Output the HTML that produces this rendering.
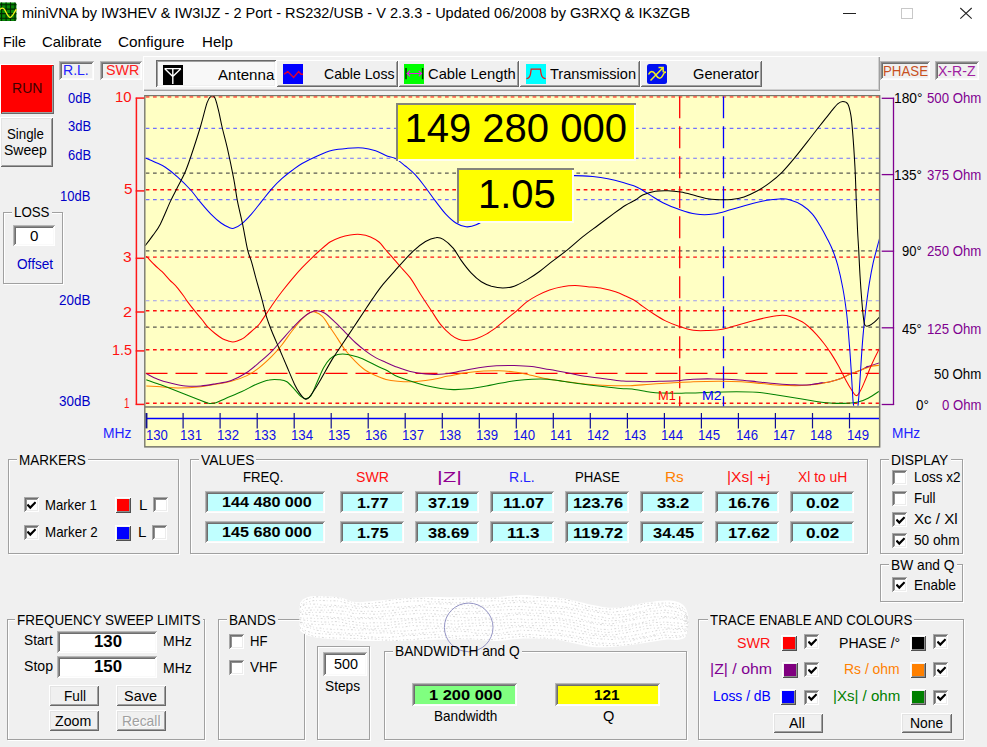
<!DOCTYPE html>
<html lang="en"><head><meta charset="utf-8"><title>miniVNA</title><style>
html,body{margin:0;padding:0}
body{width:987px;height:747px;overflow:hidden;background:#f0f0f0;position:relative;font-family:"Liberation Sans",sans-serif}
#w{position:absolute;left:0;top:0;width:987px;height:747px;overflow:hidden;background:#f0f0f0}
#w div,#w svg,#w span{position:absolute}
.gb{border:1px solid #a0a0a0;box-shadow:1px 1px 0 #fff,inset 1px 1px 0 #fff}
.t{white-space:pre;line-height:20px;height:20px;transform-origin:0 50%}
</style></head><body><div id="w">
<div style="left:0px;top:0px;width:987px;height:51px;background:#fff"></div>
<div style="left:0px;top:51px;width:987px;height:1px;background:#f5f5f5"></div>
<svg class="ab" style="left:0;top:0" width="18" height="24" viewBox="0 0 18 24">
<path d="M0 2.6H14.8Q16.4 2.6 16.4 4.2V19.4Q16.4 21 14.8 21H0Z" fill="#078707"/>
<path d="M1.6 2.6V21M6.1 2.6V21M10.5 2.6V21M15 2.6V21M0 4.7H16.4M0 9.1H16.4M0 13.6H16.4M0 18.2H16.4" stroke="#012a01" stroke-width="1.1"/>
<path d="M0 9.6 C1 8 3.2 7.4 4.6 9.6 S8 17.4 10.1 17.4 S14 12.5 16.4 9.2" fill="none" stroke="#f4f41c" stroke-width="1.4"/></svg>
<svg class="ab" style="left:830px;top:0" width="157" height="30" viewBox="0 0 157 30">
<path d="M13 13.5H26" stroke="#222" stroke-width="1"/>
<rect x="71.5" y="8.5" width="11" height="10" fill="none" stroke="#c8c8c8" stroke-width="1"/>
<path d="M130.3 8 L141.7 18.6 M141.7 8 L130.3 18.6" stroke="#222" stroke-width="1.05"/></svg>
<div class="sk" style="left:0px;top:63.5px;width:54px;height:50.5px;background:#ff0000;box-shadow:inset 1px 1px 0 #ffffff,inset -1px -1px 0 #696969,inset 2px 2px 0 #ff0000,inset -2px -2px 0 #a0a0a0"></div>
<div class="sk" style="left:0px;top:117px;width:52.7px;height:50px;background:#f0f0f0;box-shadow:inset 1px 1px 0 #ffffff,inset -1px -1px 0 #696969,inset 2px 2px 0 #e3e3e3,inset -2px -2px 0 #a0a0a0"></div>
<div class="sk" style="left:59px;top:60.5px;width:35px;height:19.5px;background:#f0f0f0;box-shadow:inset 1px 1px 0 #b8b8b8,inset -1px -1px 0 #ffffff,inset 2px 2px 0 #8a8a8a,inset -2px -2px 0 #fafafa,inset 3px 3px 0 #6e6e6e"></div>
<div class="sk" style="left:100px;top:60.5px;width:42px;height:19.5px;background:#f0f0f0;box-shadow:inset 1px 1px 0 #b8b8b8,inset -1px -1px 0 #ffffff,inset 2px 2px 0 #8a8a8a,inset -2px -2px 0 #fafafa,inset 3px 3px 0 #6e6e6e"></div>
<div class="gb" style="left:3px;top:212px;width:58px;height:70px"></div>
<div style="left:11.7px;top:210px;width:39.9px;height:6px;background:#f0f0f0"></div>
<div class="sk" style="left:13px;top:225px;width:42px;height:21px;background:#fff;box-shadow:inset 1px 1px 0 #b8b8b8,inset -1px -1px 0 #ffffff,inset 2px 2px 0 #8a8a8a,inset -2px -2px 0 #fafafa,inset 3px 3px 0 #6e6e6e"></div>
<div style="left:143px;top:56.2px;width:737px;height:35.3px;background:#f2f2f2;box-shadow:inset 1px 1px 0 #fff,inset -1px -1px 0 #a0a0a0,inset -2px -2px 0 #d0d0d0"></div>
<div class="sk" style="left:156px;top:60px;width:120px;height:27px;background:#f8f8f8;box-shadow:inset 1px 1px 0 #696969,inset -1px -1px 0 #ffffff,inset 2px 2px 0 #a0a0a0,inset -2px -2px 0 #f0f0f0"></div>
<div class="sk" style="left:276px;top:60px;width:121.5px;height:27px;background:#f0f0f0;box-shadow:inset 1px 1px 0 #ffffff,inset -1px -1px 0 #696969,inset 2px 2px 0 #f0f0f0,inset -2px -2px 0 #a0a0a0"></div>
<div class="sk" style="left:397.5px;top:60px;width:121.5px;height:27px;background:#f0f0f0;box-shadow:inset 1px 1px 0 #ffffff,inset -1px -1px 0 #696969,inset 2px 2px 0 #f0f0f0,inset -2px -2px 0 #a0a0a0"></div>
<div class="sk" style="left:519px;top:60px;width:121px;height:27px;background:#f0f0f0;box-shadow:inset 1px 1px 0 #ffffff,inset -1px -1px 0 #696969,inset 2px 2px 0 #f0f0f0,inset -2px -2px 0 #a0a0a0"></div>
<div class="sk" style="left:640px;top:60px;width:121.5px;height:27px;background:#f0f0f0;box-shadow:inset 1px 1px 0 #ffffff,inset -1px -1px 0 #696969,inset 2px 2px 0 #f0f0f0,inset -2px -2px 0 #a0a0a0"></div>
<svg class="ab" style="left:163px;top:65px" width="20" height="20" viewBox="0 0 20 20"><rect width="20" height="20" fill="#000"/>
<path d="M1.5 3.6H18 M9.8 3.6V19 M1.8 3.8L9.8 11.6L17.8 3.8" fill="none" stroke="#fff" stroke-width="1.4"/></svg>
<svg class="ab" style="left:283px;top:64px" width="20" height="20" viewBox="0 0 20 20"><rect width="20" height="20" fill="#0000ff"/>
<path d="M1 10.2 L4.8 7.6 L10.6 13.4 L15.6 7.6 L18 10.2 H20" fill="none" stroke="#e00030" stroke-width="1.4"/></svg>
<svg class="ab" style="left:404px;top:64px" width="20" height="20" viewBox="0 0 20 20"><rect width="20" height="20" fill="#00ff00"/>
<path d="M2 4V15.2 M18.6 4V15.2" stroke="#003000" stroke-width="1.5"/><path d="M3.2 9.5H17.5 M6 6.8L3.2 9.5L6 12.2 M14.8 6.8L17.5 9.5L14.8 12.2" fill="none" stroke="#e020e0" stroke-width="1.2"/></svg>
<svg class="ab" style="left:525.5px;top:64px" width="20" height="20" viewBox="0 0 20 20"><rect width="20" height="20" fill="#00ffff"/>
<path d="M0.5 14.6 C3.5 14.2 4.4 12.5 5.2 5 H14.4 C15.2 12.5 16.2 14.2 19.6 14.6" fill="none" stroke="#f01414" stroke-width="1.25"/></svg>
<svg class="ab" style="left:646.5px;top:64px" width="20" height="20" viewBox="0 0 20 20"><rect width="20" height="20" rx="2.5" fill="#0010f0"/>
<path d="M1.5 10.5 C3.5 6.5 6 6.5 8.5 10.5 S13.5 16 16 11 S18 8.5 19 8.5" fill="none" stroke="#f0f020" stroke-width="1.5"/>
<path d="M3.5 16.5 L16 3.8 M11.5 3.6 H16.2 V8.2" fill="none" stroke="#f0f020" stroke-width="1.5"/></svg>
<div class="sk" style="left:880px;top:60.5px;width:50px;height:19.5px;background:#f0f0f0;box-shadow:inset 1px 1px 0 #b8b8b8,inset -1px -1px 0 #ffffff,inset 2px 2px 0 #8a8a8a,inset -2px -2px 0 #fafafa,inset 3px 3px 0 #6e6e6e"></div>
<div class="sk" style="left:934.5px;top:60.5px;width:44.5px;height:19.5px;background:#f0f0f0;box-shadow:inset 1px 1px 0 #b8b8b8,inset -1px -1px 0 #ffffff,inset 2px 2px 0 #8a8a8a,inset -2px -2px 0 #fafafa,inset 3px 3px 0 #6e6e6e"></div>
<div class="gb" style="left:8px;top:459px;width:169px;height:93px"></div>
<div style="left:16.8px;top:457px;width:71.1px;height:6px;background:#f0f0f0"></div>
<div class="sk" style="left:23.5px;top:497px;width:15px;height:15px;background:#fff;box-shadow:inset 1px 1px 0 #a8a8a8,inset -1px -1px 0 #ffffff,inset 2px 2px 0 #707070,inset -2px -2px 0 #ececec,inset 3px 3px 0 #909090"></div>
<svg class="ck" style="left:27px;top:500.5px" width="9" height="9" viewBox="0 0 9 9"><path d="M0.4 3.6 L3.3 6.6 L8.6 1.2" fill="none" stroke="#000" stroke-width="2.2"/></svg>
<div class="sk" style="left:23.5px;top:524.5px;width:15px;height:15px;background:#fff;box-shadow:inset 1px 1px 0 #a8a8a8,inset -1px -1px 0 #ffffff,inset 2px 2px 0 #707070,inset -2px -2px 0 #ececec,inset 3px 3px 0 #909090"></div>
<svg class="ck" style="left:27px;top:528px" width="9" height="9" viewBox="0 0 9 9"><path d="M0.4 3.6 L3.3 6.6 L8.6 1.2" fill="none" stroke="#000" stroke-width="2.2"/></svg>
<div class="sk" style="left:114.5px;top:497px;width:16px;height:16px;background:#ff0000;box-shadow:inset 1px 1px 0 #ffffff,inset -1px -1px 0 #505050,inset 2px 2px 0 #f4f4f4,inset -2px -2px 0 #8c8c8c"></div>
<div class="sk" style="left:114.5px;top:524.5px;width:16px;height:16px;background:#0000ff;box-shadow:inset 1px 1px 0 #ffffff,inset -1px -1px 0 #505050,inset 2px 2px 0 #f4f4f4,inset -2px -2px 0 #8c8c8c"></div>
<div class="sk" style="left:153px;top:497px;width:15px;height:15px;background:#fff;box-shadow:inset 1px 1px 0 #a8a8a8,inset -1px -1px 0 #ffffff,inset 2px 2px 0 #707070,inset -2px -2px 0 #ececec,inset 3px 3px 0 #909090"></div>
<div class="sk" style="left:152px;top:524.5px;width:15px;height:15px;background:#fff;box-shadow:inset 1px 1px 0 #a8a8a8,inset -1px -1px 0 #ffffff,inset 2px 2px 0 #707070,inset -2px -2px 0 #ececec,inset 3px 3px 0 #909090"></div>
<div class="gb" style="left:190px;top:459px;width:676px;height:93px"></div>
<div style="left:198.5px;top:457px;width:57.9px;height:6px;background:#f0f0f0"></div>
<div class="sk" style="left:205px;top:490.5px;width:120px;height:22px;background:#c0ffff;box-shadow:inset 1px 1px 0 #b8b8b8,inset -1px -1px 0 #ffffff,inset 2px 2px 0 #8a8a8a,inset -2px -2px 0 #fafafa,inset 3px 3px 0 #6e6e6e"></div>
<div class="sk" style="left:340.3px;top:490.5px;width:63.8px;height:22px;background:#c0ffff;box-shadow:inset 1px 1px 0 #b8b8b8,inset -1px -1px 0 #ffffff,inset 2px 2px 0 #8a8a8a,inset -2px -2px 0 #fafafa,inset 3px 3px 0 #6e6e6e"></div>
<div class="sk" style="left:415.2px;top:490.5px;width:63.8px;height:22px;background:#c0ffff;box-shadow:inset 1px 1px 0 #b8b8b8,inset -1px -1px 0 #ffffff,inset 2px 2px 0 #8a8a8a,inset -2px -2px 0 #fafafa,inset 3px 3px 0 #6e6e6e"></div>
<div class="sk" style="left:490.4px;top:490.5px;width:63.6px;height:22px;background:#c0ffff;box-shadow:inset 1px 1px 0 #b8b8b8,inset -1px -1px 0 #ffffff,inset 2px 2px 0 #8a8a8a,inset -2px -2px 0 #fafafa,inset 3px 3px 0 #6e6e6e"></div>
<div class="sk" style="left:565.1px;top:490.5px;width:64.1px;height:22px;background:#c0ffff;box-shadow:inset 1px 1px 0 #b8b8b8,inset -1px -1px 0 #ffffff,inset 2px 2px 0 #8a8a8a,inset -2px -2px 0 #fafafa,inset 3px 3px 0 #6e6e6e"></div>
<div class="sk" style="left:640.1px;top:490.5px;width:63.9px;height:22px;background:#c0ffff;box-shadow:inset 1px 1px 0 #b8b8b8,inset -1px -1px 0 #ffffff,inset 2px 2px 0 #8a8a8a,inset -2px -2px 0 #fafafa,inset 3px 3px 0 #6e6e6e"></div>
<div class="sk" style="left:715.4px;top:490.5px;width:63.3px;height:22px;background:#c0ffff;box-shadow:inset 1px 1px 0 #b8b8b8,inset -1px -1px 0 #ffffff,inset 2px 2px 0 #8a8a8a,inset -2px -2px 0 #fafafa,inset 3px 3px 0 #6e6e6e"></div>
<div class="sk" style="left:790px;top:490.5px;width:63.7px;height:22px;background:#c0ffff;box-shadow:inset 1px 1px 0 #b8b8b8,inset -1px -1px 0 #ffffff,inset 2px 2px 0 #8a8a8a,inset -2px -2px 0 #fafafa,inset 3px 3px 0 #6e6e6e"></div>
<div class="sk" style="left:205px;top:520.5px;width:120px;height:22px;background:#c0ffff;box-shadow:inset 1px 1px 0 #b8b8b8,inset -1px -1px 0 #ffffff,inset 2px 2px 0 #8a8a8a,inset -2px -2px 0 #fafafa,inset 3px 3px 0 #6e6e6e"></div>
<div class="sk" style="left:340.3px;top:520.5px;width:63.8px;height:22px;background:#c0ffff;box-shadow:inset 1px 1px 0 #b8b8b8,inset -1px -1px 0 #ffffff,inset 2px 2px 0 #8a8a8a,inset -2px -2px 0 #fafafa,inset 3px 3px 0 #6e6e6e"></div>
<div class="sk" style="left:415.2px;top:520.5px;width:63.8px;height:22px;background:#c0ffff;box-shadow:inset 1px 1px 0 #b8b8b8,inset -1px -1px 0 #ffffff,inset 2px 2px 0 #8a8a8a,inset -2px -2px 0 #fafafa,inset 3px 3px 0 #6e6e6e"></div>
<div class="sk" style="left:490.4px;top:520.5px;width:63.6px;height:22px;background:#c0ffff;box-shadow:inset 1px 1px 0 #b8b8b8,inset -1px -1px 0 #ffffff,inset 2px 2px 0 #8a8a8a,inset -2px -2px 0 #fafafa,inset 3px 3px 0 #6e6e6e"></div>
<div class="sk" style="left:565.1px;top:520.5px;width:64.1px;height:22px;background:#c0ffff;box-shadow:inset 1px 1px 0 #b8b8b8,inset -1px -1px 0 #ffffff,inset 2px 2px 0 #8a8a8a,inset -2px -2px 0 #fafafa,inset 3px 3px 0 #6e6e6e"></div>
<div class="sk" style="left:640.1px;top:520.5px;width:63.9px;height:22px;background:#c0ffff;box-shadow:inset 1px 1px 0 #b8b8b8,inset -1px -1px 0 #ffffff,inset 2px 2px 0 #8a8a8a,inset -2px -2px 0 #fafafa,inset 3px 3px 0 #6e6e6e"></div>
<div class="sk" style="left:715.4px;top:520.5px;width:63.3px;height:22px;background:#c0ffff;box-shadow:inset 1px 1px 0 #b8b8b8,inset -1px -1px 0 #ffffff,inset 2px 2px 0 #8a8a8a,inset -2px -2px 0 #fafafa,inset 3px 3px 0 #6e6e6e"></div>
<div class="sk" style="left:790px;top:520.5px;width:63.7px;height:22px;background:#c0ffff;box-shadow:inset 1px 1px 0 #b8b8b8,inset -1px -1px 0 #ffffff,inset 2px 2px 0 #8a8a8a,inset -2px -2px 0 #fafafa,inset 3px 3px 0 #6e6e6e"></div>
<div class="gb" style="left:880px;top:459px;width:81px;height:93px"></div>
<div style="left:888.9px;top:457px;width:61.7px;height:6px;background:#f0f0f0"></div>
<div class="sk" style="left:892px;top:470px;width:15px;height:15px;background:#fff;box-shadow:inset 1px 1px 0 #a8a8a8,inset -1px -1px 0 #ffffff,inset 2px 2px 0 #707070,inset -2px -2px 0 #ececec,inset 3px 3px 0 #909090"></div>
<div class="sk" style="left:892px;top:491px;width:15px;height:15px;background:#fff;box-shadow:inset 1px 1px 0 #a8a8a8,inset -1px -1px 0 #ffffff,inset 2px 2px 0 #707070,inset -2px -2px 0 #ececec,inset 3px 3px 0 #909090"></div>
<div class="sk" style="left:892px;top:512px;width:15px;height:15px;background:#fff;box-shadow:inset 1px 1px 0 #a8a8a8,inset -1px -1px 0 #ffffff,inset 2px 2px 0 #707070,inset -2px -2px 0 #ececec,inset 3px 3px 0 #909090"></div>
<svg class="ck" style="left:895.5px;top:515.5px" width="9" height="9" viewBox="0 0 9 9"><path d="M0.4 3.6 L3.3 6.6 L8.6 1.2" fill="none" stroke="#000" stroke-width="2.2"/></svg>
<div class="sk" style="left:892px;top:533px;width:15px;height:15px;background:#fff;box-shadow:inset 1px 1px 0 #a8a8a8,inset -1px -1px 0 #ffffff,inset 2px 2px 0 #707070,inset -2px -2px 0 #ececec,inset 3px 3px 0 #909090"></div>
<svg class="ck" style="left:895.5px;top:536.5px" width="9" height="9" viewBox="0 0 9 9"><path d="M0.4 3.6 L3.3 6.6 L8.6 1.2" fill="none" stroke="#000" stroke-width="2.2"/></svg>
<div class="gb" style="left:880px;top:564px;width:81px;height:36px"></div>
<div style="left:888.9px;top:562px;width:67.9px;height:6px;background:#f0f0f0"></div>
<div class="sk" style="left:892px;top:577px;width:15px;height:15px;background:#fff;box-shadow:inset 1px 1px 0 #a8a8a8,inset -1px -1px 0 #ffffff,inset 2px 2px 0 #707070,inset -2px -2px 0 #ececec,inset 3px 3px 0 #909090"></div>
<svg class="ck" style="left:895.5px;top:580.5px" width="9" height="9" viewBox="0 0 9 9"><path d="M0.4 3.6 L3.3 6.6 L8.6 1.2" fill="none" stroke="#000" stroke-width="2.2"/></svg>
<div class="gb" style="left:7px;top:619px;width:196px;height:119px"></div>
<div style="left:15.2px;top:617px;width:187.8px;height:6px;background:#f0f0f0"></div>
<div class="sk" style="left:57px;top:630.5px;width:100px;height:22px;background:#fff;box-shadow:inset 1px 1px 0 #b8b8b8,inset -1px -1px 0 #ffffff,inset 2px 2px 0 #8a8a8a,inset -2px -2px 0 #fafafa,inset 3px 3px 0 #6e6e6e"></div>
<div class="sk" style="left:57px;top:656px;width:100px;height:22px;background:#fff;box-shadow:inset 1px 1px 0 #b8b8b8,inset -1px -1px 0 #ffffff,inset 2px 2px 0 #8a8a8a,inset -2px -2px 0 #fafafa,inset 3px 3px 0 #6e6e6e"></div>
<div class="sk" style="left:49px;top:685px;width:50px;height:20.5px;background:#f0f0f0;box-shadow:inset 1px 1px 0 #ffffff,inset -1px -1px 0 #696969,inset 2px 2px 0 #e3e3e3,inset -2px -2px 0 #a0a0a0"></div>
<div class="sk" style="left:115.5px;top:685px;width:50px;height:20.5px;background:#f0f0f0;box-shadow:inset 1px 1px 0 #ffffff,inset -1px -1px 0 #696969,inset 2px 2px 0 #e3e3e3,inset -2px -2px 0 #a0a0a0"></div>
<div class="sk" style="left:49px;top:710px;width:50px;height:20.5px;background:#f0f0f0;box-shadow:inset 1px 1px 0 #ffffff,inset -1px -1px 0 #696969,inset 2px 2px 0 #e3e3e3,inset -2px -2px 0 #a0a0a0"></div>
<div class="sk" style="left:115.5px;top:710px;width:50px;height:20.5px;background:#f0f0f0;box-shadow:inset 1px 1px 0 #ffffff,inset -1px -1px 0 #696969,inset 2px 2px 0 #e3e3e3,inset -2px -2px 0 #a0a0a0"></div>
<div class="gb" style="left:218px;top:619px;width:85px;height:119px"></div>
<div style="left:226.6px;top:617px;width:51.1px;height:6px;background:#f0f0f0"></div>
<div class="sk" style="left:228.5px;top:633.5px;width:15px;height:15px;background:#fff;box-shadow:inset 1px 1px 0 #a8a8a8,inset -1px -1px 0 #ffffff,inset 2px 2px 0 #707070,inset -2px -2px 0 #ececec,inset 3px 3px 0 #909090"></div>
<div class="sk" style="left:228.5px;top:659.5px;width:15px;height:15px;background:#fff;box-shadow:inset 1px 1px 0 #a8a8a8,inset -1px -1px 0 #ffffff,inset 2px 2px 0 #707070,inset -2px -2px 0 #ececec,inset 3px 3px 0 #909090"></div>
<div class="gb" style="left:317px;top:646px;width:51px;height:92px"></div>
<div class="sk" style="left:323px;top:651.5px;width:43.5px;height:24.5px;background:#fff;box-shadow:inset 1px 1px 0 #b8b8b8,inset -1px -1px 0 #ffffff,inset 2px 2px 0 #8a8a8a,inset -2px -2px 0 #fafafa,inset 3px 3px 0 #6e6e6e"></div>
<div class="gb" style="left:384px;top:651px;width:301px;height:87px"></div>
<div style="left:392.7px;top:649px;width:129.1px;height:6px;background:#f0f0f0"></div>
<div class="sk" style="left:411.5px;top:682.5px;width:105px;height:23px;background:#80ff80;box-shadow:inset 1px 1px 0 #b8b8b8,inset -1px -1px 0 #ffffff,inset 2px 2px 0 #8a8a8a,inset -2px -2px 0 #fafafa,inset 3px 3px 0 #6e6e6e"></div>
<div class="sk" style="left:554.5px;top:682.5px;width:105px;height:23px;background:#ffff00;box-shadow:inset 1px 1px 0 #b8b8b8,inset -1px -1px 0 #ffffff,inset 2px 2px 0 #8a8a8a,inset -2px -2px 0 #fafafa,inset 3px 3px 0 #6e6e6e"></div>
<div class="gb" style="left:698px;top:619px;width:264px;height:119px"></div>
<div style="left:707.5px;top:617px;width:206.7px;height:6px;background:#f0f0f0"></div>
<div class="sk" style="left:780.5px;top:635px;width:16px;height:16px;background:#ff0000;box-shadow:inset 1px 1px 0 #ffffff,inset -1px -1px 0 #505050,inset 2px 2px 0 #f4f4f4,inset -2px -2px 0 #8c8c8c"></div>
<div class="sk" style="left:781.5px;top:662px;width:16px;height:16px;background:#800080;box-shadow:inset 1px 1px 0 #ffffff,inset -1px -1px 0 #505050,inset 2px 2px 0 #f4f4f4,inset -2px -2px 0 #8c8c8c"></div>
<div class="sk" style="left:779.5px;top:689px;width:16px;height:16px;background:#0000ff;box-shadow:inset 1px 1px 0 #ffffff,inset -1px -1px 0 #505050,inset 2px 2px 0 #f4f4f4,inset -2px -2px 0 #8c8c8c"></div>
<div class="sk" style="left:909.5px;top:635px;width:16px;height:16px;background:#000000;box-shadow:inset 1px 1px 0 #ffffff,inset -1px -1px 0 #505050,inset 2px 2px 0 #f4f4f4,inset -2px -2px 0 #8c8c8c"></div>
<div class="sk" style="left:909.5px;top:662px;width:16px;height:16px;background:#ff8000;box-shadow:inset 1px 1px 0 #ffffff,inset -1px -1px 0 #505050,inset 2px 2px 0 #f4f4f4,inset -2px -2px 0 #8c8c8c"></div>
<div class="sk" style="left:909.5px;top:689px;width:16px;height:16px;background:#008000;box-shadow:inset 1px 1px 0 #ffffff,inset -1px -1px 0 #505050,inset 2px 2px 0 #f4f4f4,inset -2px -2px 0 #8c8c8c"></div>
<div class="sk" style="left:804px;top:634px;width:15px;height:15px;background:#fff;box-shadow:inset 1px 1px 0 #a8a8a8,inset -1px -1px 0 #ffffff,inset 2px 2px 0 #707070,inset -2px -2px 0 #ececec,inset 3px 3px 0 #909090"></div>
<svg class="ck" style="left:807.5px;top:637.5px" width="9" height="9" viewBox="0 0 9 9"><path d="M0.4 3.6 L3.3 6.6 L8.6 1.2" fill="none" stroke="#000" stroke-width="2.2"/></svg>
<div class="sk" style="left:933px;top:634px;width:15px;height:15px;background:#fff;box-shadow:inset 1px 1px 0 #a8a8a8,inset -1px -1px 0 #ffffff,inset 2px 2px 0 #707070,inset -2px -2px 0 #ececec,inset 3px 3px 0 #909090"></div>
<svg class="ck" style="left:936.5px;top:637.5px" width="9" height="9" viewBox="0 0 9 9"><path d="M0.4 3.6 L3.3 6.6 L8.6 1.2" fill="none" stroke="#000" stroke-width="2.2"/></svg>
<div class="sk" style="left:804px;top:662px;width:15px;height:15px;background:#fff;box-shadow:inset 1px 1px 0 #a8a8a8,inset -1px -1px 0 #ffffff,inset 2px 2px 0 #707070,inset -2px -2px 0 #ececec,inset 3px 3px 0 #909090"></div>
<svg class="ck" style="left:807.5px;top:665.5px" width="9" height="9" viewBox="0 0 9 9"><path d="M0.4 3.6 L3.3 6.6 L8.6 1.2" fill="none" stroke="#000" stroke-width="2.2"/></svg>
<div class="sk" style="left:933px;top:662px;width:15px;height:15px;background:#fff;box-shadow:inset 1px 1px 0 #a8a8a8,inset -1px -1px 0 #ffffff,inset 2px 2px 0 #707070,inset -2px -2px 0 #ececec,inset 3px 3px 0 #909090"></div>
<svg class="ck" style="left:936.5px;top:665.5px" width="9" height="9" viewBox="0 0 9 9"><path d="M0.4 3.6 L3.3 6.6 L8.6 1.2" fill="none" stroke="#000" stroke-width="2.2"/></svg>
<div class="sk" style="left:804px;top:689.5px;width:15px;height:15px;background:#fff;box-shadow:inset 1px 1px 0 #a8a8a8,inset -1px -1px 0 #ffffff,inset 2px 2px 0 #707070,inset -2px -2px 0 #ececec,inset 3px 3px 0 #909090"></div>
<svg class="ck" style="left:807.5px;top:693px" width="9" height="9" viewBox="0 0 9 9"><path d="M0.4 3.6 L3.3 6.6 L8.6 1.2" fill="none" stroke="#000" stroke-width="2.2"/></svg>
<div class="sk" style="left:933px;top:689.5px;width:15px;height:15px;background:#fff;box-shadow:inset 1px 1px 0 #a8a8a8,inset -1px -1px 0 #ffffff,inset 2px 2px 0 #707070,inset -2px -2px 0 #ececec,inset 3px 3px 0 #909090"></div>
<svg class="ck" style="left:936.5px;top:693px" width="9" height="9" viewBox="0 0 9 9"><path d="M0.4 3.6 L3.3 6.6 L8.6 1.2" fill="none" stroke="#000" stroke-width="2.2"/></svg>
<div class="sk" style="left:772.5px;top:712.5px;width:50.5px;height:20px;background:#f0f0f0;box-shadow:inset 1px 1px 0 #ffffff,inset -1px -1px 0 #696969,inset 2px 2px 0 #e3e3e3,inset -2px -2px 0 #a0a0a0"></div>
<div class="sk" style="left:901px;top:712.5px;width:50.5px;height:20px;background:#f0f0f0;box-shadow:inset 1px 1px 0 #ffffff,inset -1px -1px 0 #696969,inset 2px 2px 0 #e3e3e3,inset -2px -2px 0 #a0a0a0"></div>
<svg class="ab" style="left:0;top:0" width="987" height="747" viewBox="0 0 987 747"><defs><clipPath id="cb"><path d="M299.7 606.0 C300.0 601.7 300.7 602.3 301.5 601.0 C302.3 599.7 302.5 599.2 304.6 598.4 C306.7 597.6 308.6 596.2 314.3 596.0 C320.0 595.8 331.7 596.2 338.6 597.2 C345.5 598.2 349.6 601.4 355.7 602.0 C361.8 602.6 367.8 601.4 375.1 600.8 C382.4 600.2 391.3 599.0 399.4 598.4 C407.5 597.8 415.6 597.4 423.7 597.2 C431.8 597.0 439.9 597.2 448.0 597.2 C456.1 597.2 464.3 597.2 472.4 597.2 C480.5 597.2 488.8 597.6 496.7 597.2 C504.6 596.8 513.1 595.2 520.0 595.0 C526.9 594.8 530.6 595.4 538.2 596.0 C545.8 596.6 556.5 597.2 565.6 598.7 C574.7 600.2 585.4 603.5 593.0 605.0 C600.6 606.5 605.1 607.6 611.2 607.8 C617.3 608.0 623.3 606.9 629.4 606.0 C635.5 605.1 641.6 603.2 647.7 602.3 C653.8 601.4 660.7 600.5 665.9 600.5 C671.1 600.5 675.4 600.9 678.7 602.3 C682.1 603.7 684.3 605.5 686.0 608.7 C687.7 611.9 688.7 617.0 688.7 621.5 C688.7 626.0 687.7 633.0 686.0 636.0 C684.3 639.0 682.1 639.1 678.7 639.7 C675.4 640.3 671.1 639.2 665.9 639.7 C660.7 640.2 653.8 641.5 647.7 642.4 C641.6 643.3 635.5 644.4 629.4 645.2 C623.3 646.0 617.3 646.7 611.2 647.0 C605.1 647.3 599.1 647.6 593.0 647.0 C586.9 646.4 580.8 644.6 574.7 643.4 C568.6 642.2 562.6 640.5 556.5 639.7 C550.4 638.9 544.3 638.9 538.2 638.8 C532.1 638.6 526.9 638.4 520.0 638.8 C513.1 639.1 504.6 640.8 496.7 640.9 C488.8 641.0 482.5 639.9 472.4 639.7 C462.3 639.5 448.1 639.5 435.9 639.7 C423.7 639.9 411.6 640.7 399.4 640.9 C387.2 641.1 373.0 641.1 362.9 640.9 C352.8 640.7 346.7 640.3 338.6 639.7 C330.5 639.1 320.4 638.5 314.3 637.3 C308.2 636.1 304.6 634.1 302.2 632.4 C299.8 630.7 300.1 631.4 299.7 627.0 C299.3 622.6 299.4 610.3 299.7 606.0Z"/></clipPath></defs><path d="M299.7 606.0 C300.0 601.7 300.7 602.3 301.5 601.0 C302.3 599.7 302.5 599.2 304.6 598.4 C306.7 597.6 308.6 596.2 314.3 596.0 C320.0 595.8 331.7 596.2 338.6 597.2 C345.5 598.2 349.6 601.4 355.7 602.0 C361.8 602.6 367.8 601.4 375.1 600.8 C382.4 600.2 391.3 599.0 399.4 598.4 C407.5 597.8 415.6 597.4 423.7 597.2 C431.8 597.0 439.9 597.2 448.0 597.2 C456.1 597.2 464.3 597.2 472.4 597.2 C480.5 597.2 488.8 597.6 496.7 597.2 C504.6 596.8 513.1 595.2 520.0 595.0 C526.9 594.8 530.6 595.4 538.2 596.0 C545.8 596.6 556.5 597.2 565.6 598.7 C574.7 600.2 585.4 603.5 593.0 605.0 C600.6 606.5 605.1 607.6 611.2 607.8 C617.3 608.0 623.3 606.9 629.4 606.0 C635.5 605.1 641.6 603.2 647.7 602.3 C653.8 601.4 660.7 600.5 665.9 600.5 C671.1 600.5 675.4 600.9 678.7 602.3 C682.1 603.7 684.3 605.5 686.0 608.7 C687.7 611.9 688.7 617.0 688.7 621.5 C688.7 626.0 687.7 633.0 686.0 636.0 C684.3 639.0 682.1 639.1 678.7 639.7 C675.4 640.3 671.1 639.2 665.9 639.7 C660.7 640.2 653.8 641.5 647.7 642.4 C641.6 643.3 635.5 644.4 629.4 645.2 C623.3 646.0 617.3 646.7 611.2 647.0 C605.1 647.3 599.1 647.6 593.0 647.0 C586.9 646.4 580.8 644.6 574.7 643.4 C568.6 642.2 562.6 640.5 556.5 639.7 C550.4 638.9 544.3 638.9 538.2 638.8 C532.1 638.6 526.9 638.4 520.0 638.8 C513.1 639.1 504.6 640.8 496.7 640.9 C488.8 641.0 482.5 639.9 472.4 639.7 C462.3 639.5 448.1 639.5 435.9 639.7 C423.7 639.9 411.6 640.7 399.4 640.9 C387.2 641.1 373.0 641.1 362.9 640.9 C352.8 640.7 346.7 640.3 338.6 639.7 C330.5 639.1 320.4 638.5 314.3 637.3 C308.2 636.1 304.6 634.1 302.2 632.4 C299.8 630.7 300.1 631.4 299.7 627.0 C299.3 622.6 299.4 610.3 299.7 606.0Z" fill="#ffffff"/><g clip-path="url(#cb)" stroke="#c8c8c8" stroke-width="0.7" fill="none"><path d="M297.0 607.3 L301.0 604.2 L305.0 599.6 L309.0 598.9 L313.0 597.5 L317.0 596.8 L321.0 597.2 L325.0 596.8 L329.0 597.3 L333.0 597.2 L337.0 597.5 L341.0 598.7 L345.0 600.4 L349.0 601.2 L353.0 602.6 L357.0 603.9 L361.0 604.2 L365.0 603.8 L369.0 603.4 L373.0 603.6 L377.0 602.3 L381.0 602.5 L385.0 601.3 L389.0 600.5 L393.0 599.8 L397.0 599.3 L401.0 599.3 L405.0 598.5 L409.0 598.6 L413.0 598.6 L417.0 598.3 L421.0 598.6 L425.0 598.3 L429.0 598.6 L433.0 599.0 L437.0 599.6 L441.0 599.5 L445.0 599.5 L449.0 599.6 L453.0 599.4 L457.0 599.0 L461.0 599.2 L465.0 598.8 L469.0 598.1 L473.0 598.2 L477.0 598.0 L481.0 598.2 L485.0 598.1 L489.0 597.8 L493.0 598.6 L497.0 598.0 L501.0 598.2 L505.0 598.4 L509.0 597.8 L513.0 597.9 L517.0 597.3 L521.0 597.7 L525.0 597.9 L529.0 597.8 L533.0 598.1 L537.0 597.5 L541.0 597.9 L545.0 597.9 L549.0 598.0 L553.0 598.1 L557.0 598.8 L561.0 599.3 L565.0 599.4 L569.0 600.5 L573.0 601.2 L577.0 602.9 L581.0 604.1 L585.0 605.6 L589.0 606.6 L593.0 607.2 L597.0 607.9 L601.0 608.7 L605.0 608.6 L609.0 609.3 L613.0 609.0 L617.0 608.2 L621.0 607.5 L625.0 607.5 L629.0 606.3 L633.0 605.6 L637.0 604.9 L641.0 604.6 L645.0 603.3 L649.0 603.2 L653.0 603.2 L657.0 603.3 L661.0 603.2 L665.0 603.0 L669.0 603.0 L673.0 603.7 L677.0 604.1 L681.0 606.6 L685.0 609.8 L689.0 621.9" stroke-dasharray="1.2 2.2 2 1.8 0.8 2.6" stroke-dashoffset="1.9"/><path d="M297.0 608.9 L301.0 606.2 L305.0 603.0 L309.0 601.8 L313.0 600.6 L317.0 600.6 L321.0 600.5 L325.0 600.6 L329.0 600.9 L333.0 600.8 L337.0 600.8 L341.0 601.6 L345.0 602.8 L349.0 603.5 L353.0 605.6 L357.0 606.4 L361.0 606.5 L365.0 606.5 L369.0 606.1 L373.0 606.0 L377.0 605.5 L381.0 605.5 L385.0 604.5 L389.0 603.9 L393.0 603.4 L397.0 602.7 L401.0 602.3 L405.0 601.6 L409.0 601.2 L413.0 601.1 L417.0 600.9 L421.0 601.1 L425.0 600.8 L429.0 601.9 L433.0 601.9 L437.0 601.8 L441.0 602.1 L445.0 602.4 L449.0 602.5 L453.0 602.3 L457.0 602.9 L461.0 602.8 L465.0 602.1 L469.0 601.9 L473.0 601.2 L477.0 601.0 L481.0 601.0 L485.0 600.8 L489.0 601.2 L493.0 600.7 L497.0 600.7 L501.0 601.4 L505.0 600.9 L509.0 600.4 L513.0 600.7 L517.0 600.1 L521.0 600.5 L525.0 601.2 L529.0 601.4 L533.0 601.3 L537.0 601.0 L541.0 601.1 L545.0 601.0 L549.0 601.7 L553.0 601.5 L557.0 601.9 L561.0 601.8 L565.0 602.1 L569.0 603.5 L573.0 604.7 L577.0 605.7 L581.0 606.8 L585.0 608.0 L589.0 609.1 L593.0 609.8 L597.0 610.8 L601.0 611.3 L605.0 611.6 L609.0 612.1 L613.0 612.3 L617.0 611.6 L621.0 611.3 L625.0 610.9 L629.0 609.8 L633.0 609.2 L637.0 608.3 L641.0 607.4 L645.0 606.1 L649.0 605.5 L653.0 605.3 L657.0 605.1 L661.0 604.9 L665.0 605.2 L669.0 606.0 L673.0 606.7 L677.0 606.9 L681.0 609.0 L685.0 612.0 L689.0 623.3" stroke-dasharray="1.2 2.2 2 1.8 0.8 2.6" stroke-dashoffset="7.0"/><path d="M297.0 609.3 L301.0 607.1 L305.0 604.4 L309.0 603.9 L313.0 604.2 L317.0 604.0 L321.0 604.9 L325.0 605.3 L329.0 605.0 L333.0 605.1 L337.0 605.7 L341.0 605.9 L345.0 606.0 L349.0 606.7 L353.0 607.4 L357.0 608.4 L361.0 608.1 L365.0 607.3 L369.0 607.7 L373.0 607.8 L377.0 607.5 L381.0 607.2 L385.0 607.3 L389.0 606.9 L393.0 606.7 L397.0 607.4 L401.0 606.9 L405.0 606.6 L409.0 606.7 L413.0 605.9 L417.0 605.8 L421.0 605.3 L425.0 604.3 L429.0 604.1 L433.0 603.9 L437.0 603.7 L441.0 604.0 L445.0 603.7 L449.0 604.0 L453.0 604.0 L457.0 605.0 L461.0 604.8 L465.0 605.2 L469.0 605.5 L473.0 606.0 L477.0 605.7 L481.0 606.1 L485.0 605.7 L489.0 605.5 L493.0 605.3 L497.0 604.6 L501.0 604.3 L505.0 603.4 L509.0 602.7 L513.0 602.9 L517.0 601.9 L521.0 602.0 L525.0 602.6 L529.0 602.8 L533.0 603.1 L537.0 603.7 L541.0 604.3 L545.0 605.1 L549.0 605.1 L553.0 605.9 L557.0 606.0 L561.0 606.4 L565.0 607.1 L569.0 607.5 L573.0 608.1 L577.0 608.9 L581.0 609.7 L585.0 609.9 L589.0 610.8 L593.0 611.6 L597.0 612.2 L601.0 613.0 L605.0 613.5 L609.0 614.4 L613.0 614.7 L617.0 615.0 L621.0 614.6 L625.0 614.6 L629.0 614.3 L633.0 613.0 L637.0 612.4 L641.0 611.7 L645.0 610.6 L649.0 609.0 L653.0 608.3 L657.0 607.9 L661.0 606.9 L665.0 606.5 L669.0 606.6 L673.0 607.6 L677.0 608.3 L681.0 610.3 L685.0 612.4 L689.0 624.4" stroke-dasharray="1.2 2.2 2 1.8 0.8 2.6" stroke-dashoffset="7.0"/><path d="M297.0 612.3 L301.0 610.5 L305.0 607.8 L309.0 608.0 L313.0 607.1 L317.0 607.0 L321.0 607.4 L325.0 607.3 L329.0 606.6 L333.0 606.8 L337.0 607.0 L341.0 607.3 L345.0 608.1 L349.0 609.2 L353.0 610.6 L357.0 610.7 L361.0 611.4 L365.0 611.4 L369.0 611.1 L373.0 611.4 L377.0 611.6 L381.0 611.3 L385.0 610.6 L389.0 611.0 L393.0 610.3 L397.0 609.9 L401.0 608.6 L405.0 608.3 L409.0 607.6 L413.0 607.9 L417.0 607.1 L421.0 606.8 L425.0 607.0 L429.0 607.6 L433.0 607.7 L437.0 607.5 L441.0 607.7 L445.0 608.6 L449.0 608.6 L453.0 608.8 L457.0 608.4 L461.0 608.3 L465.0 608.7 L469.0 608.3 L473.0 607.7 L477.0 608.3 L481.0 607.8 L485.0 607.7 L489.0 606.9 L493.0 607.5 L497.0 606.8 L501.0 607.2 L505.0 606.6 L509.0 606.4 L513.0 606.5 L517.0 606.8 L521.0 606.2 L525.0 606.5 L529.0 607.2 L533.0 607.1 L537.0 607.2 L541.0 607.4 L545.0 607.4 L549.0 607.7 L553.0 607.8 L557.0 607.9 L561.0 608.5 L565.0 608.4 L569.0 609.3 L573.0 609.9 L577.0 611.0 L581.0 611.7 L585.0 613.1 L589.0 614.0 L593.0 615.8 L597.0 616.4 L601.0 616.8 L605.0 617.7 L609.0 618.6 L613.0 617.9 L617.0 618.1 L621.0 617.1 L625.0 616.5 L629.0 616.2 L633.0 614.8 L637.0 613.8 L641.0 613.0 L645.0 612.4 L649.0 611.1 L653.0 611.2 L657.0 610.8 L661.0 610.5 L665.0 610.1 L669.0 610.6 L673.0 611.0 L677.0 611.8 L681.0 613.3 L685.0 616.1 L689.0 625.8" stroke-dasharray="1.2 2.2 2 1.8 0.8 2.6" stroke-dashoffset="1.7"/><path d="M297.0 613.5 L301.0 612.2 L305.0 610.6 L309.0 610.2 L313.0 610.0 L317.0 610.0 L321.0 610.2 L325.0 610.0 L329.0 610.2 L333.0 610.0 L337.0 610.6 L341.0 611.0 L345.0 611.4 L349.0 611.9 L353.0 613.4 L357.0 613.5 L361.0 613.7 L365.0 613.5 L369.0 614.0 L373.0 614.2 L377.0 614.2 L381.0 613.8 L385.0 613.9 L389.0 613.2 L393.0 613.0 L397.0 612.4 L401.0 612.2 L405.0 611.4 L409.0 610.9 L413.0 610.7 L417.0 610.3 L421.0 610.3 L425.0 610.1 L429.0 610.3 L433.0 610.4 L437.0 610.6 L441.0 611.0 L445.0 610.9 L449.0 611.1 L453.0 611.9 L457.0 611.4 L461.0 612.0 L465.0 611.9 L469.0 611.2 L473.0 611.7 L477.0 611.6 L481.0 611.1 L485.0 611.0 L489.0 610.9 L493.0 610.1 L497.0 610.4 L501.0 610.0 L505.0 609.9 L509.0 609.7 L513.0 609.6 L517.0 609.3 L521.0 609.6 L525.0 609.8 L529.0 610.2 L533.0 610.1 L537.0 610.2 L541.0 610.5 L545.0 611.0 L549.0 610.9 L553.0 611.6 L557.0 611.4 L561.0 611.7 L565.0 612.0 L569.0 612.7 L573.0 613.2 L577.0 613.6 L581.0 615.3 L585.0 616.3 L589.0 617.2 L593.0 618.3 L597.0 619.2 L601.0 619.3 L605.0 620.6 L609.0 620.8 L613.0 620.7 L617.0 620.5 L621.0 620.4 L625.0 619.4 L629.0 619.2 L633.0 618.4 L637.0 616.9 L641.0 615.8 L645.0 614.9 L649.0 614.3 L653.0 613.9 L657.0 613.4 L661.0 613.1 L665.0 612.4 L669.0 612.9 L673.0 613.7 L677.0 614.8 L681.0 615.8 L685.0 617.9 L689.0 626.6" stroke-dasharray="1.2 2.2 2 1.8 0.8 2.6" stroke-dashoffset="0.6"/><path d="M297.0 615.3 L301.0 614.2 L305.0 613.0 L309.0 612.5 L313.0 612.4 L317.0 612.3 L321.0 612.3 L325.0 612.0 L329.0 612.8 L333.0 612.3 L337.0 613.3 L341.0 614.0 L345.0 614.1 L349.0 615.5 L353.0 616.9 L357.0 617.8 L361.0 617.5 L365.0 617.5 L369.0 617.4 L373.0 617.9 L377.0 617.0 L381.0 617.0 L385.0 616.1 L389.0 615.9 L393.0 615.8 L397.0 614.5 L401.0 614.7 L405.0 614.1 L409.0 614.1 L413.0 613.8 L417.0 613.3 L421.0 613.9 L425.0 613.7 L429.0 613.5 L433.0 613.7 L437.0 614.4 L441.0 614.6 L445.0 614.6 L449.0 614.5 L453.0 614.6 L457.0 614.4 L461.0 614.7 L465.0 613.7 L469.0 614.0 L473.0 613.8 L477.0 613.0 L481.0 613.7 L485.0 613.4 L489.0 613.7 L493.0 613.3 L497.0 613.6 L501.0 613.5 L505.0 614.0 L509.0 613.5 L513.0 613.2 L517.0 613.1 L521.0 612.9 L525.0 612.9 L529.0 613.0 L533.0 613.7 L537.0 613.1 L541.0 613.6 L545.0 613.1 L549.0 613.1 L553.0 613.4 L557.0 613.3 L561.0 613.9 L565.0 615.0 L569.0 615.8 L573.0 616.8 L577.0 617.8 L581.0 619.2 L585.0 620.4 L589.0 621.2 L593.0 622.4 L597.0 622.3 L601.0 623.4 L605.0 623.4 L609.0 623.9 L613.0 623.7 L617.0 622.7 L621.0 621.8 L625.0 621.9 L629.0 620.5 L633.0 619.9 L637.0 619.0 L641.0 618.2 L645.0 618.0 L649.0 617.7 L653.0 616.8 L657.0 617.0 L661.0 616.5 L665.0 616.5 L669.0 616.8 L673.0 617.1 L677.0 617.4 L681.0 618.4 L685.0 620.2 L689.0 627.7" stroke-dasharray="1.2 2.2 2 1.8 0.8 2.6" stroke-dashoffset="2.3"/><path d="M297.0 615.5 L301.0 614.6 L305.0 614.2 L309.0 614.7 L313.0 615.1 L317.0 615.9 L321.0 616.1 L325.0 616.6 L329.0 616.9 L333.0 617.4 L337.0 617.7 L341.0 617.9 L345.0 618.0 L349.0 618.4 L353.0 618.9 L357.0 619.0 L361.0 618.8 L365.0 618.5 L369.0 618.6 L373.0 619.2 L377.0 618.5 L381.0 618.9 L385.0 619.1 L389.0 619.4 L393.0 618.9 L397.0 618.9 L401.0 618.7 L405.0 618.7 L409.0 618.5 L413.0 618.6 L417.0 618.0 L421.0 617.6 L425.0 616.4 L429.0 616.1 L433.0 616.4 L437.0 616.4 L441.0 616.0 L445.0 616.2 L449.0 615.8 L453.0 616.4 L457.0 617.1 L461.0 617.3 L465.0 617.6 L469.0 618.0 L473.0 617.5 L477.0 617.6 L481.0 617.7 L485.0 618.0 L489.0 618.1 L493.0 618.1 L497.0 617.7 L501.0 617.0 L505.0 616.4 L509.0 615.6 L513.0 615.2 L517.0 614.3 L521.0 614.8 L525.0 614.5 L529.0 615.5 L533.0 615.6 L537.0 615.8 L541.0 616.1 L545.0 616.8 L549.0 617.6 L553.0 618.1 L557.0 617.9 L561.0 618.3 L565.0 619.1 L569.0 619.8 L573.0 620.2 L577.0 620.6 L581.0 621.5 L585.0 621.6 L589.0 622.6 L593.0 623.6 L597.0 624.4 L601.0 624.6 L605.0 625.3 L609.0 625.6 L613.0 625.7 L617.0 625.6 L621.0 626.1 L625.0 625.6 L629.0 625.0 L633.0 624.0 L637.0 623.6 L641.0 622.9 L645.0 621.7 L649.0 620.6 L653.0 620.2 L657.0 619.7 L661.0 618.3 L665.0 617.5 L669.0 617.9 L673.0 618.3 L677.0 619.0 L681.0 619.4 L685.0 621.2 L689.0 628.5" stroke-dasharray="1.2 2.2 2 1.8 0.8 2.6" stroke-dashoffset="5.4"/><path d="M297.0 618.5 L301.0 617.8 L305.0 618.3 L309.0 618.1 L313.0 618.2 L317.0 618.8 L321.0 618.4 L325.0 619.0 L329.0 618.6 L333.0 618.5 L337.0 618.7 L341.0 619.4 L345.0 620.3 L349.0 621.4 L353.0 621.5 L357.0 622.5 L361.0 622.6 L365.0 623.5 L369.0 622.8 L373.0 622.8 L377.0 622.7 L381.0 622.8 L385.0 622.9 L389.0 622.5 L393.0 621.9 L397.0 621.7 L401.0 621.2 L405.0 620.2 L409.0 619.7 L413.0 620.1 L417.0 619.8 L421.0 619.1 L425.0 619.7 L429.0 619.6 L433.0 619.8 L437.0 620.0 L441.0 620.1 L445.0 620.2 L449.0 620.6 L453.0 620.7 L457.0 621.2 L461.0 620.4 L465.0 620.9 L469.0 620.0 L473.0 619.8 L477.0 620.1 L481.0 619.9 L485.0 619.5 L489.0 619.1 L493.0 619.6 L497.0 619.7 L501.0 620.0 L505.0 619.2 L509.0 619.2 L513.0 619.6 L517.0 618.8 L521.0 619.1 L525.0 619.7 L529.0 619.8 L533.0 619.2 L537.0 619.2 L541.0 619.3 L545.0 620.1 L549.0 619.5 L553.0 619.9 L557.0 620.1 L561.0 620.0 L565.0 620.5 L569.0 621.9 L573.0 622.5 L577.0 623.2 L581.0 624.7 L585.0 625.5 L589.0 626.6 L593.0 627.5 L597.0 628.7 L601.0 629.3 L605.0 629.4 L609.0 629.9 L613.0 628.9 L617.0 628.5 L621.0 628.1 L625.0 627.8 L629.0 627.1 L633.0 625.7 L637.0 624.7 L641.0 624.0 L645.0 623.4 L649.0 623.2 L653.0 622.2 L657.0 622.5 L661.0 622.2 L665.0 622.1 L669.0 622.4 L673.0 622.7 L677.0 622.9 L681.0 623.4 L685.0 623.9 L689.0 630.3" stroke-dasharray="1.2 2.2 2 1.8 0.8 2.6" stroke-dashoffset="0.8"/><path d="M297.0 619.8 L301.0 619.7 L305.0 620.2 L309.0 620.6 L313.0 621.5 L317.0 621.4 L321.0 622.0 L325.0 622.0 L329.0 622.1 L333.0 621.6 L337.0 621.6 L341.0 622.1 L345.0 623.1 L349.0 624.0 L353.0 624.6 L357.0 625.0 L361.0 625.5 L365.0 625.9 L369.0 626.1 L373.0 626.2 L377.0 626.3 L381.0 625.9 L385.0 625.2 L389.0 625.5 L393.0 624.6 L397.0 624.3 L401.0 623.7 L405.0 623.6 L409.0 622.8 L413.0 622.6 L417.0 622.4 L421.0 622.2 L425.0 622.9 L429.0 622.8 L433.0 622.8 L437.0 623.1 L441.0 623.9 L445.0 623.7 L449.0 623.6 L453.0 624.2 L457.0 624.0 L461.0 624.2 L465.0 623.2 L469.0 623.3 L473.0 623.3 L477.0 623.2 L481.0 623.1 L485.0 622.2 L489.0 622.4 L493.0 622.4 L497.0 622.6 L501.0 623.1 L505.0 622.6 L509.0 622.8 L513.0 622.3 L517.0 622.6 L521.0 622.2 L525.0 622.3 L529.0 622.9 L533.0 623.2 L537.0 622.4 L541.0 622.8 L545.0 622.9 L549.0 622.5 L553.0 622.6 L557.0 622.5 L561.0 623.0 L565.0 623.5 L569.0 624.6 L573.0 625.6 L577.0 626.2 L581.0 627.1 L585.0 628.5 L589.0 629.9 L593.0 630.6 L597.0 631.2 L601.0 631.5 L605.0 632.4 L609.0 632.4 L613.0 631.8 L617.0 631.2 L621.0 630.9 L625.0 630.3 L629.0 629.7 L633.0 628.3 L637.0 627.5 L641.0 627.1 L645.0 626.1 L649.0 625.4 L653.0 625.1 L657.0 625.4 L661.0 624.6 L665.0 624.6 L669.0 624.7 L673.0 625.3 L677.0 626.1 L681.0 626.4 L685.0 626.0 L689.0 630.8" stroke-dasharray="1.2 2.2 2 1.8 0.8 2.6" stroke-dashoffset="7.7"/><path d="M297.0 620.7 L301.0 622.3 L305.0 623.0 L309.0 624.0 L313.0 624.2 L317.0 624.8 L321.0 624.5 L325.0 624.3 L329.0 624.2 L333.0 624.8 L337.0 625.1 L341.0 625.8 L345.0 625.7 L349.0 626.8 L353.0 627.3 L357.0 628.1 L361.0 628.1 L365.0 628.5 L369.0 628.8 L373.0 629.3 L377.0 628.5 L381.0 628.7 L385.0 628.7 L389.0 628.5 L393.0 627.4 L397.0 626.9 L401.0 627.2 L405.0 626.9 L409.0 626.1 L413.0 625.4 L417.0 626.1 L421.0 625.5 L425.0 626.0 L429.0 625.9 L433.0 626.3 L437.0 625.9 L441.0 626.8 L445.0 626.5 L449.0 626.8 L453.0 627.3 L457.0 627.2 L461.0 626.5 L465.0 626.3 L469.0 626.2 L473.0 626.0 L477.0 625.8 L481.0 625.4 L485.0 625.5 L489.0 625.9 L493.0 626.2 L497.0 625.6 L501.0 625.9 L505.0 625.9 L509.0 625.2 L513.0 625.8 L517.0 625.1 L521.0 625.5 L525.0 625.7 L529.0 625.9 L533.0 625.6 L537.0 625.7 L541.0 625.8 L545.0 625.7 L549.0 625.9 L553.0 625.6 L557.0 625.7 L561.0 625.8 L565.0 626.9 L569.0 627.6 L573.0 628.3 L577.0 629.8 L581.0 630.8 L585.0 631.7 L589.0 632.5 L593.0 633.9 L597.0 634.0 L601.0 634.4 L605.0 634.9 L609.0 634.8 L613.0 634.9 L617.0 634.4 L621.0 633.3 L625.0 633.2 L629.0 632.0 L633.0 631.6 L637.0 630.8 L641.0 629.8 L645.0 628.7 L649.0 628.5 L653.0 628.0 L657.0 628.3 L661.0 627.3 L665.0 627.7 L669.0 628.1 L673.0 628.3 L677.0 628.7 L681.0 628.2 L685.0 628.6 L689.0 632.1" stroke-dasharray="1.2 2.2 2 1.8 0.8 2.6" stroke-dashoffset="10.1"/><path d="M297.0 620.8 L301.0 622.8 L305.0 625.0 L309.0 625.5 L313.0 627.0 L317.0 628.1 L321.0 628.1 L325.0 629.2 L329.0 628.9 L333.0 629.6 L337.0 629.1 L341.0 629.6 L345.0 630.1 L349.0 629.6 L353.0 629.8 L357.0 630.2 L361.0 630.0 L365.0 629.7 L369.0 629.9 L373.0 630.0 L377.0 630.8 L381.0 630.8 L385.0 631.2 L389.0 630.7 L393.0 631.4 L397.0 630.8 L401.0 631.1 L405.0 631.1 L409.0 630.5 L413.0 630.6 L417.0 629.9 L421.0 629.5 L425.0 629.4 L429.0 628.3 L433.0 628.8 L437.0 628.3 L441.0 628.1 L445.0 628.5 L449.0 628.2 L453.0 629.1 L457.0 629.0 L461.0 629.1 L465.0 629.7 L469.0 629.7 L473.0 629.6 L477.0 630.4 L481.0 629.9 L485.0 630.6 L489.0 630.0 L493.0 630.3 L497.0 630.4 L501.0 629.4 L505.0 628.8 L509.0 627.9 L513.0 627.2 L517.0 626.8 L521.0 626.7 L525.0 627.4 L529.0 627.5 L533.0 627.9 L537.0 628.6 L541.0 628.4 L545.0 628.9 L549.0 629.7 L553.0 629.5 L557.0 629.7 L561.0 630.6 L565.0 630.9 L569.0 631.7 L573.0 632.2 L577.0 633.0 L581.0 633.6 L585.0 633.8 L589.0 634.9 L593.0 635.6 L597.0 635.5 L601.0 636.5 L605.0 636.3 L609.0 636.6 L613.0 636.8 L617.0 637.2 L621.0 637.2 L625.0 636.9 L629.0 636.2 L633.0 635.5 L637.0 634.5 L641.0 634.2 L645.0 633.2 L649.0 632.1 L653.0 631.5 L657.0 630.5 L661.0 630.2 L665.0 629.4 L669.0 628.9 L673.0 629.7 L677.0 629.2 L681.0 629.6 L685.0 629.1 L689.0 632.3" stroke-dasharray="1.2 2.2 2 1.8 0.8 2.6" stroke-dashoffset="0.6"/><path d="M297.0 621.9 L301.0 624.1 L305.0 626.9 L309.0 627.6 L313.0 629.0 L317.0 630.3 L321.0 630.9 L325.0 631.6 L329.0 632.3 L333.0 632.2 L337.0 632.7 L341.0 633.0 L345.0 632.9 L349.0 633.8 L353.0 633.8 L357.0 633.7 L361.0 632.9 L365.0 633.5 L369.0 633.2 L373.0 632.8 L377.0 633.1 L381.0 632.9 L385.0 632.8 L389.0 632.9 L393.0 633.2 L397.0 633.3 L401.0 633.7 L405.0 634.1 L409.0 634.0 L413.0 634.0 L417.0 633.7 L421.0 633.0 L425.0 632.9 L429.0 632.4 L433.0 632.3 L437.0 631.7 L441.0 631.2 L445.0 631.4 L449.0 631.6 L453.0 631.0 L457.0 631.7 L461.0 631.1 L465.0 631.6 L469.0 631.9 L473.0 632.7 L477.0 633.3 L481.0 633.4 L485.0 633.3 L489.0 634.0 L493.0 633.6 L497.0 633.5 L501.0 633.5 L505.0 632.6 L509.0 632.0 L513.0 631.3 L517.0 631.0 L521.0 630.1 L525.0 630.4 L529.0 630.4 L533.0 630.7 L537.0 630.5 L541.0 631.2 L545.0 631.6 L549.0 631.9 L553.0 632.3 L557.0 633.2 L561.0 633.5 L565.0 635.1 L569.0 635.1 L573.0 635.7 L577.0 636.3 L581.0 637.6 L585.0 637.6 L589.0 637.9 L593.0 638.4 L597.0 638.4 L601.0 639.0 L605.0 639.1 L609.0 639.4 L613.0 639.5 L617.0 638.7 L621.0 639.1 L625.0 638.8 L629.0 639.1 L633.0 638.7 L637.0 638.2 L641.0 636.8 L645.0 636.8 L649.0 636.1 L653.0 635.3 L657.0 633.8 L661.0 633.0 L665.0 632.1 L669.0 631.7 L673.0 632.4 L677.0 632.4 L681.0 631.7 L685.0 630.9 L689.0 633.0" stroke-dasharray="1.2 2.2 2 1.8 0.8 2.6" stroke-dashoffset="3.0"/><path d="M297.0 624.9 L301.0 627.8 L305.0 630.4 L309.0 631.8 L313.0 633.2 L317.0 633.4 L321.0 633.8 L325.0 633.9 L329.0 634.4 L333.0 634.1 L337.0 634.2 L341.0 634.9 L345.0 634.7 L349.0 635.3 L353.0 635.5 L357.0 635.4 L361.0 636.2 L365.0 636.5 L369.0 637.1 L373.0 637.0 L377.0 637.5 L381.0 637.4 L385.0 637.1 L389.0 637.6 L393.0 636.8 L397.0 637.1 L401.0 636.2 L405.0 635.6 L409.0 635.4 L413.0 635.5 L417.0 635.4 L421.0 634.3 L425.0 634.6 L429.0 634.5 L433.0 634.9 L437.0 634.5 L441.0 635.1 L445.0 635.2 L449.0 635.9 L453.0 635.6 L457.0 636.4 L461.0 635.9 L465.0 635.7 L469.0 636.0 L473.0 635.7 L477.0 635.2 L481.0 635.6 L485.0 635.0 L489.0 635.5 L493.0 635.4 L497.0 635.6 L501.0 635.1 L505.0 634.5 L509.0 634.4 L513.0 634.3 L517.0 634.6 L521.0 633.9 L525.0 635.0 L529.0 634.4 L533.0 634.8 L537.0 634.9 L541.0 635.6 L545.0 635.3 L549.0 635.2 L553.0 635.6 L557.0 635.0 L561.0 635.7 L565.0 636.3 L569.0 637.1 L573.0 637.8 L577.0 638.5 L581.0 639.2 L585.0 640.1 L589.0 641.0 L593.0 642.7 L597.0 642.9 L601.0 643.3 L605.0 643.1 L609.0 643.5 L613.0 643.8 L617.0 643.2 L621.0 642.2 L625.0 641.9 L629.0 641.6 L633.0 640.2 L637.0 639.2 L641.0 638.4 L645.0 637.9 L649.0 637.3 L653.0 636.1 L657.0 635.7 L661.0 635.3 L665.0 635.1 L669.0 635.5 L673.0 635.5 L677.0 636.0 L681.0 635.3 L685.0 634.7 L689.0 635.6" stroke-dasharray="1.2 2.2 2 1.8 0.8 2.6" stroke-dashoffset="1.1"/><path d="M297.0 625.5 L301.0 628.6 L305.0 632.8 L309.0 634.5 L313.0 636.2 L317.0 636.8 L321.0 637.1 L325.0 637.9 L329.0 637.7 L333.0 637.9 L337.0 638.2 L341.0 637.9 L345.0 638.2 L349.0 638.5 L353.0 638.4 L357.0 638.4 L361.0 638.6 L365.0 638.6 L369.0 638.5 L373.0 639.1 L377.0 639.2 L381.0 639.8 L385.0 640.2 L389.0 640.0 L393.0 640.3 L397.0 640.5 L401.0 640.1 L405.0 639.7 L409.0 639.8 L413.0 639.6 L417.0 639.1 L421.0 638.6 L425.0 638.3 L429.0 637.8 L433.0 637.5 L437.0 637.2 L441.0 637.2 L445.0 637.6 L449.0 637.4 L453.0 637.9 L457.0 638.5 L461.0 638.8 L465.0 638.9 L469.0 638.8 L473.0 639.0 L477.0 639.2 L481.0 639.5 L485.0 639.3 L489.0 639.5 L493.0 639.6 L497.0 638.8 L501.0 638.6 L505.0 638.1 L509.0 637.3 L513.0 637.0 L517.0 637.1 L521.0 636.1 L525.0 636.8 L529.0 636.8 L533.0 637.6 L537.0 638.1 L541.0 638.1 L545.0 638.1 L549.0 638.8 L553.0 638.9 L557.0 639.3 L561.0 639.7 L565.0 640.4 L569.0 641.1 L573.0 641.3 L577.0 641.7 L581.0 642.8 L585.0 642.8 L589.0 644.0 L593.0 644.6 L597.0 645.1 L601.0 644.7 L605.0 645.8 L609.0 645.5 L613.0 645.4 L617.0 645.4 L621.0 645.3 L625.0 644.7 L629.0 644.7 L633.0 644.0 L637.0 643.4 L641.0 642.2 L645.0 641.2 L649.0 640.3 L653.0 639.9 L657.0 639.3 L661.0 638.2 L665.0 637.3 L669.0 637.7 L673.0 637.5 L677.0 637.6 L681.0 636.8 L685.0 635.8 L689.0 636.1" stroke-dasharray="1.2 2.2 2 1.8 0.8 2.6" stroke-dashoffset="6.7"/></g><circle cx="468.7" cy="627.4" r="24.3" fill="none" stroke="#9494c4" stroke-width="1"/></svg>
<svg class="ab" style="left:0;top:0" width="987" height="747" viewBox="0 0 987 747"><rect x="144.1" y="95" width="736.3" height="352.6" fill="#77776c"/><rect x="145.5" y="96.2" width="733.4" height="310" fill="#ffffc4"/><rect x="145.5" y="407.7" width="733.4" height="38.4" fill="#ffffc4"/><defs><clipPath id="cp"><rect x="145.5" y="96.2" width="733.4" height="310"/></clipPath></defs><g clip-path="url(#cp)" fill="none"><path d="M145.5 128.4H880" stroke="#7070ff" stroke-width="1.1" stroke-dasharray="3.7 3.6" stroke-dashoffset="-0.2"/><path d="M145.5 158.2H880" stroke="#7070ff" stroke-width="1.1" stroke-dasharray="3.7 3.6" stroke-dashoffset="-0.2"/><path d="M145.5 199.6H880" stroke="#7070ff" stroke-width="1.1" stroke-dasharray="3.7 3.6" stroke-dashoffset="-0.2"/><path d="M145.5 300.7H880" stroke="#9c9cf0" stroke-width="1.1" stroke-dasharray="3.7 3.6" stroke-dashoffset="-0.2"/><path d="M145.5 173.2H880" stroke="#5a5a50" stroke-width="1.2" stroke-dasharray="3.7 3.6" stroke-dashoffset="-0.2"/><path d="M145.5 250.8H880" stroke="#5a5a50" stroke-width="1.2" stroke-dasharray="3.7 3.6" stroke-dashoffset="-0.2"/><path d="M145.5 327.1H880" stroke="#5a5a50" stroke-width="1.2" stroke-dasharray="3.7 3.6" stroke-dashoffset="-0.2"/><path d="M145.5 96.9H880" stroke="#ff1010" stroke-width="1.4" stroke-dasharray="3.7 3.6" stroke-dashoffset="-0.2"/><path d="M145.5 189.7H880" stroke="#ff1010" stroke-width="1.4" stroke-dasharray="3.7 3.6" stroke-dashoffset="-0.2"/><path d="M145.5 257.1H880" stroke="#ff1010" stroke-width="1.4" stroke-dasharray="3.7 3.6" stroke-dashoffset="-0.2"/><path d="M145.5 310.8H880" stroke="#ff1010" stroke-width="1.4" stroke-dasharray="3.7 3.6" stroke-dashoffset="-0.2"/><path d="M145.5 349.7H880" stroke="#ff1010" stroke-width="1.4" stroke-dasharray="3.7 3.6" stroke-dashoffset="-0.2"/><path d="M145.5 403.2H880" stroke="#ff1010" stroke-width="1.4" stroke-dasharray="3.7 3.6" stroke-dashoffset="-0.2"/><path d="M145.5 373.4H880" stroke="#ff0000" stroke-width="1.4" stroke-dasharray="22 8"/><path d="M679.7 96.2V408" stroke="#ff0000" stroke-width="1.3" stroke-dasharray="22 8"/><path d="M723.5 96.2V408" stroke="#0000ff" stroke-width="1.3" stroke-dasharray="22 8"/><path d="M809.8 384.8 C811.9 384.5 819.1 383.3 822.5 382.8 C825.9 382.3 827.1 382.4 830.1 381.7 C833.1 381.0 836.8 380.0 840.2 378.7 C843.6 377.4 847.0 375.5 850.4 374.1 C853.8 372.7 857.5 371.6 860.5 370.3 C863.5 369.0 866.8 366.9 868.1 366.2" stroke="#800080" stroke-width="1.05"/><path d="M146.3 386.0 C148.6 386.1 155.0 386.5 160.3 386.8 C165.6 387.1 171.2 388.0 178.0 388.0 C184.8 388.0 194.5 387.4 200.8 386.8 C207.1 386.2 210.9 385.1 216.0 384.2 C221.1 383.3 226.1 382.6 231.2 381.2 C236.3 379.8 241.8 378.1 246.4 375.9 C251.0 373.7 254.8 371.1 259.0 367.8 C263.2 364.6 267.9 360.2 271.7 356.4 C275.5 352.6 278.4 349.2 281.8 345.0 C285.2 340.8 288.6 335.4 292.0 331.0 C295.4 326.6 299.2 321.9 302.1 318.9 C305.1 315.9 307.6 313.9 309.7 312.8 C311.8 311.7 312.7 311.4 314.8 312.0 C316.9 312.6 319.9 313.8 322.4 316.4 C324.9 318.9 327.5 323.6 330.0 327.3 C332.5 331.0 335.1 334.8 337.6 338.6 C340.1 342.4 342.2 346.2 345.2 350.0 C348.1 353.8 351.9 358.0 355.3 361.4 C358.7 364.8 362.0 368.0 365.4 370.3 C368.8 372.6 372.2 373.9 375.6 375.4 C379.0 376.9 382.3 378.4 386.0 379.4 C389.7 380.4 393.2 380.8 397.7 381.2 C402.2 381.6 407.4 381.9 412.9 381.7 C418.4 381.4 424.7 380.6 430.6 379.7 C436.5 378.8 442.4 377.2 448.3 376.1 C454.2 375.0 460.1 373.6 466.0 372.8 C471.9 372.0 478.3 371.4 483.8 371.1 C489.3 370.8 493.9 370.6 499.0 370.8 C504.1 371.0 509.1 371.4 514.2 372.1 C519.3 372.8 523.9 373.8 529.4 374.9 C534.9 376.0 540.8 377.6 547.1 378.7 C553.4 379.8 560.6 380.8 567.4 381.7 C574.1 382.6 580.9 383.6 587.6 384.2 C594.4 384.8 600.8 385.2 607.9 385.5 C615.0 385.8 622.9 385.9 630.0 385.7 C637.1 385.5 643.5 384.6 650.3 384.2 C657.0 383.8 663.3 383.4 670.5 383.0 C677.7 382.6 685.3 382.0 693.3 381.7 C701.3 381.4 710.7 381.2 718.7 381.2 C726.7 381.2 734.3 381.3 741.5 381.7 C748.7 382.1 755.0 382.9 761.7 383.5 C768.5 384.1 775.2 385.0 782.0 385.3 C788.8 385.6 796.3 385.7 802.2 385.5 C808.1 385.3 812.8 384.8 817.4 384.2 C822.0 383.6 826.3 382.6 830.1 381.7 C833.9 380.8 836.8 380.0 840.2 378.7 C843.6 377.4 847.0 375.5 850.4 374.1 C853.8 372.7 857.1 371.6 860.5 370.3 C863.9 369.0 867.4 367.4 870.6 366.5 C873.9 365.6 878.4 365.4 880.0 365.2" stroke="#ff8000" stroke-width="1.05"/><path d="M146.3 373.6 C148.2 374.5 153.7 377.6 157.7 379.2 C161.7 380.8 165.8 381.9 170.4 383.0 C175.1 384.1 180.5 385.5 185.6 386.0 C190.7 386.5 195.7 386.4 200.8 386.0 C205.9 385.6 210.9 384.6 216.0 383.7 C221.1 382.8 226.1 382.2 231.2 380.4 C236.3 378.6 241.8 375.8 246.4 372.8 C251.0 369.9 254.8 366.3 259.0 362.7 C263.2 359.1 267.9 355.1 271.7 351.3 C275.5 347.5 278.4 343.7 281.8 339.9 C285.2 336.1 288.6 332.1 292.0 328.5 C295.4 324.9 299.2 321.0 302.1 318.4 C305.1 315.8 307.2 314.1 309.7 312.8 C312.2 311.5 314.8 310.7 317.3 310.8 C319.8 310.9 321.9 311.4 324.9 313.3 C327.8 315.2 331.6 319.0 335.0 322.2 C338.4 325.4 341.8 328.9 345.2 332.3 C348.6 335.7 351.9 339.4 355.3 342.5 C358.7 345.6 362.0 348.3 365.4 350.8 C368.8 353.3 372.2 355.7 375.6 357.6 C379.0 359.6 382.8 361.0 386.0 362.5 C389.2 364.0 391.1 365.0 395.1 366.5 C399.2 368.0 405.2 370.3 410.3 371.6 C415.4 372.9 420.0 373.7 425.5 374.1 C431.0 374.5 437.4 374.6 443.3 374.1 C449.2 373.6 455.1 372.2 461.0 371.1 C466.9 370.1 472.8 368.7 478.7 367.8 C484.6 366.9 490.5 366.2 496.4 365.8 C502.3 365.4 508.3 365.4 514.2 365.5 C520.1 365.6 526.0 365.8 531.9 366.5 C537.8 367.2 543.7 368.6 549.6 369.6 C555.5 370.7 561.1 371.6 567.4 372.8 C573.7 374.0 580.9 375.5 587.6 376.6 C594.4 377.7 602.0 378.5 607.9 379.2 C613.8 379.9 618.6 380.7 623.1 381.0 C627.6 381.3 631.3 381.1 635.0 381.2 C638.7 381.3 640.6 381.7 645.2 381.7 C649.9 381.7 657.0 381.4 662.9 381.2 C668.8 381.0 675.6 380.7 680.7 380.4 C685.8 380.1 687.8 379.4 693.3 379.2 C698.8 378.9 706.4 378.8 713.6 378.9 C720.8 379.0 729.2 379.2 736.4 379.7 C743.6 380.2 749.9 381.0 756.6 381.7 C763.4 382.4 770.6 383.2 776.9 383.7 C783.2 384.2 789.1 384.6 794.6 384.8 C800.1 385.0 805.1 385.1 809.8 384.8 C814.4 384.5 820.4 383.1 822.5 382.8" stroke="#800080" stroke-width="1.05"/><path d="M866.0 367.4 C866.4 367.2 865.8 367.3 868.1 366.5 C870.4 365.7 878.0 363.3 880.0 362.7" stroke="#800080" stroke-width="1.05"/><path d="M146.3 379.7 C148.2 380.4 153.7 382.2 157.7 383.7 C161.7 385.2 165.8 386.7 170.4 388.5 C175.1 390.3 180.9 392.6 185.6 394.4 C190.2 396.2 194.5 397.9 198.3 399.4 C202.1 400.9 205.5 402.6 208.4 403.2 C211.3 403.8 213.1 403.5 216.0 402.7 C218.9 401.9 221.9 400.0 226.1 398.2 C230.3 396.4 236.2 394.1 241.3 391.8 C246.4 389.5 251.8 386.2 256.5 384.2 C261.1 382.2 265.4 380.6 269.2 379.9 C273.0 379.1 276.4 379.4 279.3 379.7 C282.2 380.0 284.4 380.1 286.9 381.7 C289.4 383.3 292.2 386.9 294.5 389.3 C296.8 391.8 298.9 394.8 300.8 396.4 C302.7 398.0 304.2 398.8 305.9 398.7 C307.6 398.6 309.1 398.4 311.0 395.6 C312.9 392.8 315.2 386.3 317.3 381.7 C319.4 377.1 321.5 371.6 323.6 367.8 C325.7 364.0 327.7 361.1 330.0 358.9 C332.3 356.7 334.7 355.4 337.6 354.6 C340.6 353.9 344.3 354.0 347.7 354.4 C351.1 354.8 354.4 355.9 357.8 357.1 C361.2 358.3 364.6 359.8 368.0 361.4 C371.4 363.0 374.9 365.0 378.1 366.5 C381.3 368.0 384.2 369.0 387.0 370.5 C389.8 372.0 391.2 373.6 395.1 375.4 C399.0 377.1 405.2 379.3 410.3 381.0 C415.4 382.7 420.4 384.2 425.5 385.5 C430.6 386.8 436.1 387.8 440.7 388.5 C445.3 389.2 448.8 389.6 453.4 389.6 C458.0 389.7 463.1 389.4 468.6 388.8 C474.1 388.2 480.8 387.0 486.3 386.0 C491.8 385.0 496.4 383.9 501.5 383.0 C506.6 382.1 511.6 381.0 516.7 380.4 C521.8 379.8 526.8 379.4 531.9 379.2 C537.0 379.0 542.0 378.9 547.1 379.2 C552.2 379.5 556.8 380.4 562.3 381.2 C567.8 381.9 573.7 382.8 580.0 383.7 C586.3 384.6 593.5 385.5 600.3 386.3 C607.1 387.1 615.3 388.1 620.6 388.5 C625.9 388.9 627.9 388.5 632.0 389.0 C636.1 389.5 640.1 390.6 645.2 391.3 C650.4 392.0 656.1 392.8 662.9 393.1 C669.6 393.4 677.7 393.2 685.7 393.1 C693.7 393.0 702.7 392.5 711.1 392.3 C719.5 392.1 728.8 391.8 736.4 391.8 C744.0 391.8 749.9 391.8 756.6 392.3 C763.4 392.8 770.1 393.9 776.9 394.9 C783.7 395.9 790.9 397.1 797.2 398.2 C803.5 399.2 809.0 400.4 814.9 401.2 C820.8 402.0 827.1 402.9 832.6 403.2 C838.1 403.5 843.6 403.4 847.8 403.2 C852.0 403.0 854.6 402.8 858.0 402.0 C861.4 401.2 864.4 400.1 868.1 398.2 C871.8 396.3 878.0 391.9 880.0 390.6" stroke="#008000" stroke-width="1.05"/><path d="M146.0 256.6 C146.2 256.7 146.0 256.0 147.4 257.4 C148.8 258.8 152.2 262.6 154.7 265.0 C157.1 267.4 159.6 269.2 162.1 271.7 C164.6 274.2 167.1 277.2 169.5 279.8 C171.9 282.4 174.4 284.3 176.8 287.1 C179.2 289.9 182.5 294.4 184.2 296.7 C185.9 299.0 185.4 298.8 187.1 301.1 C188.8 303.4 192.0 307.6 194.5 310.7 C197.0 313.8 199.7 316.8 201.9 319.5 C204.1 322.2 205.5 324.6 207.7 326.9 C209.9 329.2 212.6 331.5 215.1 333.5 C217.6 335.5 220.3 337.5 222.5 338.7 C224.7 339.9 226.7 340.4 228.4 340.9 C230.1 341.4 231.3 341.9 232.8 341.9 C234.3 341.9 235.5 341.5 237.2 340.9 C238.9 340.3 241.1 339.6 243.1 338.4 C245.1 337.2 247.0 335.2 249.0 333.5 C251.0 331.8 253.1 330.1 254.9 328.4 C256.7 326.7 257.2 327.0 260.0 323.2 C262.8 319.4 268.1 310.9 271.7 305.7 C275.3 300.5 278.4 296.2 281.8 291.8 C285.2 287.4 288.6 283.1 292.0 279.1 C295.4 275.1 298.7 271.3 302.1 267.7 C305.5 264.1 309.2 260.5 312.2 257.6 C315.1 254.7 316.8 253.1 319.8 250.5 C322.8 247.9 326.6 244.2 330.0 242.0 C333.4 239.8 336.6 238.6 340.0 237.4 C343.4 236.2 346.8 235.4 350.2 234.9 C353.6 234.4 357.0 234.1 360.4 234.4 C363.8 234.7 367.4 235.6 370.5 236.9 C373.6 238.2 376.6 240.0 379.0 242.0 C381.4 244.0 382.7 246.4 385.0 249.0 C387.3 251.6 390.1 254.7 392.6 257.6 C395.1 260.5 397.2 263.1 400.2 266.5 C403.1 269.9 406.9 273.3 410.3 277.9 C413.7 282.5 417.1 289.0 420.5 294.3 C423.9 299.6 427.2 304.4 430.6 309.5 C434.0 314.6 437.3 320.5 440.7 324.7 C444.1 328.9 447.9 332.5 450.9 334.9 C453.9 337.3 456.0 338.3 458.5 339.2 C461.0 340.1 463.1 340.5 466.0 340.4 C468.9 340.3 472.8 339.8 476.2 338.7 C479.6 337.6 482.9 336.0 486.3 334.1 C489.7 332.2 493.0 329.8 496.4 327.3 C499.8 324.8 503.2 321.6 506.6 318.9 C510.0 316.1 513.3 313.6 516.7 310.8 C520.1 308.0 523.4 304.4 526.8 301.9 C530.2 299.4 533.2 297.6 537.0 295.6 C540.8 293.6 545.4 291.5 549.6 290.0 C553.8 288.5 558.1 287.4 562.3 286.7 C566.5 285.9 570.8 285.5 575.0 285.5 C579.2 285.5 583.0 286.2 587.6 286.7 C592.2 287.2 598.1 287.6 602.8 288.5 C607.4 289.4 611.7 290.5 615.5 291.8 C619.3 293.1 622.4 294.6 625.6 296.1 C628.9 297.6 632.6 299.3 635.0 300.7 C637.4 302.1 637.1 302.4 640.1 304.5 C643.1 306.6 648.6 310.6 652.8 313.3 C657.0 316.0 661.3 318.8 665.5 320.9 C669.7 323.0 673.5 324.4 678.1 326.0 C682.7 327.6 688.2 329.6 693.3 330.3 C698.4 331.1 703.4 330.7 708.5 330.5 C713.6 330.3 718.6 330.0 723.7 329.0 C728.8 328.0 733.8 326.1 738.9 324.7 C744.0 323.3 749.0 321.7 754.1 320.4 C759.2 319.1 764.6 318.0 769.3 317.1 C773.9 316.2 778.5 315.4 782.0 315.3 C785.5 315.2 786.6 315.4 790.0 316.5 C793.4 317.6 798.9 320.1 802.1 321.8 C805.3 323.6 806.6 324.9 809.0 327.0 C811.4 329.1 814.1 331.9 816.6 334.6 C819.1 337.4 821.6 340.4 824.0 343.5 C826.4 346.6 828.7 349.8 831.0 353.4 C833.3 357.0 835.6 360.7 838.0 365.0 C840.4 369.3 843.3 375.4 845.5 379.4 C847.7 383.4 849.2 386.3 851.0 389.0 C852.8 391.7 854.6 395.3 856.2 395.6 C857.8 395.9 858.9 393.3 860.5 390.6 C862.1 387.9 863.7 383.6 865.6 379.2 C867.5 374.8 869.5 369.3 871.9 364.0 C874.3 358.7 878.6 350.2 880.0 347.5" stroke="#ff0000" stroke-width="1.05"/><path d="M145.1 157.9 C146.8 158.6 151.8 160.6 155.2 162.2 C158.6 163.8 161.5 164.8 165.3 167.3 C169.1 169.8 173.8 173.6 178.0 177.4 C182.2 181.2 186.9 185.8 190.7 190.0 C194.5 194.2 197.4 198.7 200.8 202.7 C204.2 206.7 207.5 210.7 210.9 214.1 C214.3 217.5 218.0 220.8 221.0 223.0 C224.0 225.2 226.6 226.4 228.7 227.3 C230.8 228.2 231.6 228.8 233.7 228.3 C235.8 227.8 238.4 226.6 241.3 224.2 C244.2 221.8 248.0 217.9 251.4 214.1 C254.8 210.3 258.2 205.6 261.6 201.4 C265.0 197.2 268.3 192.6 271.7 188.8 C275.1 185.0 278.4 181.8 281.8 178.7 C285.2 175.6 288.6 173.0 292.0 170.5 C295.4 168.0 297.9 165.9 302.1 163.5 C306.3 161.1 312.2 158.1 317.3 155.9 C322.4 153.7 327.4 151.6 332.5 150.3 C337.6 149.0 342.6 148.7 347.7 148.3 C352.8 147.9 358.2 147.6 362.9 148.0 C367.5 148.4 371.6 149.5 375.6 150.8 C379.6 152.1 383.8 154.6 387.0 155.9 C390.2 157.2 392.1 156.7 395.1 158.4 C398.2 160.1 401.9 163.2 405.3 166.0 C408.7 168.8 412.0 171.3 415.4 174.9 C418.8 178.5 422.1 183.1 425.5 187.5 C428.9 191.9 432.3 197.0 435.7 201.4 C439.1 205.8 442.4 210.5 445.8 214.1 C449.2 217.7 452.5 220.9 455.9 223.0 C459.3 225.1 462.6 226.5 466.0 226.8 C469.4 227.1 472.2 226.6 476.2 224.8 C480.2 223.0 485.2 219.6 490.0 216.0 C494.8 212.4 500.0 207.2 505.0 203.0 C510.0 198.8 514.2 194.7 520.0 191.0 C525.8 187.3 533.3 183.4 540.0 181.0 C546.7 178.6 554.2 177.4 560.0 176.5 C565.8 175.6 569.5 175.6 575.0 175.6 C580.5 175.6 587.2 176.1 592.7 176.6 C598.2 177.1 602.8 177.7 607.9 178.7 C613.0 179.7 618.6 181.2 623.1 182.5 C627.6 183.8 632.2 185.2 635.0 186.3 C637.8 187.4 637.6 187.3 640.1 188.8 C642.6 190.3 646.5 192.8 650.3 195.1 C654.1 197.4 658.3 200.4 662.9 202.7 C667.5 205.0 672.6 207.1 678.1 209.0 C683.6 210.9 690.0 213.2 695.9 214.1 C701.8 214.9 707.7 214.8 713.6 214.1 C719.5 213.3 725.4 211.2 731.3 209.6 C737.2 208.0 743.1 206.1 749.0 204.5 C754.9 202.9 761.7 201.1 766.8 200.2 C771.9 199.3 775.6 199.0 779.4 198.9 C783.2 198.8 785.8 198.6 789.6 199.7 C793.4 200.8 798.4 202.8 802.2 205.2 C806.0 207.6 809.4 210.7 812.4 214.1 C815.4 217.5 817.5 221.3 820.0 225.5 C822.5 229.7 825.5 235.3 827.6 239.4 C829.7 243.5 830.9 245.7 832.6 250.0 C834.3 254.3 836.0 258.9 837.7 265.2 C839.4 271.5 841.3 280.0 842.8 288.0 C844.3 296.0 845.5 304.4 846.6 313.3 C847.7 322.2 848.4 331.9 849.1 341.2 C849.9 350.5 850.5 359.3 851.1 369.0 C851.7 378.7 852.5 393.3 852.9 399.4 C853.3 405.5 853.6 404.7 853.7 405.8" stroke="#0000ff" stroke-width="1.05"/><path d="M858.0 405.8 C858.2 403.5 858.7 398.8 859.2 391.8 C859.7 384.8 860.4 373.3 861.0 364.0 C861.6 354.7 862.2 345.0 863.0 336.1 C863.8 327.2 864.5 319.7 865.6 310.8 C866.7 301.9 868.1 290.9 869.4 282.9 C870.7 274.9 872.0 268.2 873.2 262.7 C874.4 257.2 875.4 254.1 876.5 249.8 C877.6 245.5 879.4 239.1 880.0 236.9" stroke="#0000ff" stroke-width="1.05"/><path d="M145.1 245.8 C146.4 244.1 150.2 239.2 152.7 235.6 C155.2 232.0 157.4 229.9 160.3 224.2 C163.2 218.5 167.5 207.7 170.4 201.4 C173.3 195.1 175.5 191.4 178.0 186.3 C180.5 181.2 183.1 177.1 185.6 171.0 C188.1 164.9 190.7 157.1 193.2 149.5 C195.7 141.9 198.5 133.3 200.8 125.5 C203.1 117.7 205.4 107.6 207.1 102.7 C208.8 97.8 209.6 97.2 210.9 96.3 C212.2 95.4 213.4 95.3 214.7 97.6 C216.0 99.9 217.2 105.2 218.5 110.3 C219.8 115.4 220.8 121.7 222.3 128.0 C223.8 134.3 225.5 139.9 227.4 148.3 C229.3 156.8 232.0 169.8 233.7 178.7 C235.4 187.5 236.0 193.8 237.5 201.4 C239.0 209.0 240.9 216.1 242.6 224.2 C244.3 232.3 246.1 243.6 247.6 249.8 C249.1 256.0 249.9 256.3 251.4 261.4 C252.9 266.5 254.8 274.3 256.5 280.4 C258.2 286.5 259.9 292.0 261.6 298.1 C263.3 304.2 264.9 311.6 266.6 317.1 C268.3 322.6 269.6 325.7 271.7 331.0 C273.8 336.3 276.8 342.9 279.3 348.8 C281.8 354.7 284.4 360.6 286.9 366.5 C289.4 372.4 292.4 379.8 294.5 384.2 C296.6 388.6 297.9 390.7 299.6 393.1 C301.3 395.5 303.1 397.9 304.6 398.7 C306.1 399.5 306.7 399.8 308.4 398.2 C310.1 396.6 312.5 392.9 314.8 389.3 C317.1 385.7 319.4 381.7 322.4 376.6 C325.3 371.5 329.1 364.4 332.5 358.9 C335.9 353.4 339.2 348.8 342.6 343.7 C346.0 338.6 349.4 333.6 352.8 328.5 C356.2 323.4 359.5 318.4 362.9 313.3 C366.3 308.2 369.6 303.0 373.0 298.1 C376.4 293.2 379.1 289.3 383.2 284.2 C387.3 279.1 392.8 273.2 397.7 267.7 C402.6 262.2 408.3 255.7 412.9 251.3 C417.5 246.9 421.7 243.8 425.5 241.5 C429.3 239.2 432.7 238.0 435.7 237.7 C438.7 237.3 440.4 237.6 443.3 239.4 C446.2 241.2 450.4 244.9 453.4 248.3 C456.3 251.8 458.1 256.0 461.0 260.1 C463.9 264.2 467.7 269.2 471.1 272.8 C474.5 276.4 477.9 279.5 481.3 281.7 C484.7 283.9 487.8 285.1 491.4 286.2 C495.0 287.2 499.0 288.0 502.8 288.0 C506.6 288.0 510.2 287.6 514.2 286.2 C518.2 284.8 522.6 282.3 526.8 279.9 C531.0 277.4 535.3 274.6 539.5 271.5 C543.7 268.4 547.6 265.0 552.2 261.4 C556.9 257.8 562.3 253.9 567.4 249.8 C572.5 245.7 577.5 241.0 582.6 236.9 C587.7 232.8 592.7 229.3 597.8 225.5 C602.9 221.7 608.4 217.5 613.0 214.1 C617.6 210.7 621.9 207.5 625.6 205.2 C629.3 202.9 632.1 201.9 635.0 200.2 C637.9 198.5 639.3 196.6 642.7 195.1 C646.1 193.6 651.1 192.0 655.3 191.3 C659.5 190.6 663.8 190.7 668.0 190.8 C672.2 190.9 676.5 191.4 680.7 192.1 C684.9 192.8 689.1 194.0 693.3 195.1 C697.5 196.2 701.8 197.6 706.0 198.4 C710.2 199.2 714.5 199.5 718.7 199.7 C722.9 199.9 727.1 199.9 731.3 199.4 C735.5 198.9 739.8 198.2 744.0 196.9 C748.2 195.6 752.4 193.6 756.6 191.3 C760.8 189.0 765.1 186.4 769.3 183.2 C773.5 180.0 777.8 176.5 782.0 172.3 C786.2 168.1 790.4 163.0 794.6 157.9 C798.8 152.8 803.1 147.3 807.3 141.9 C811.5 136.5 816.2 130.3 820.0 125.5 C823.8 120.7 827.1 116.4 830.1 112.8 C833.1 109.2 835.6 105.8 837.7 103.9 C839.8 102.0 841.1 101.4 842.8 101.4 C844.5 101.4 846.4 101.6 847.8 103.9 C849.1 106.2 850.0 110.0 850.9 115.3 C851.8 120.6 852.2 127.1 852.9 135.6 C853.6 144.0 854.3 155.4 854.9 166.0 C855.5 176.6 855.8 188.3 856.2 198.9 C856.6 209.5 857.1 220.8 857.5 229.3 C857.9 237.8 858.3 242.3 858.7 250.0 C859.1 257.7 859.5 266.9 860.0 275.3 C860.5 283.8 861.2 293.5 861.8 300.7 C862.4 307.9 863.0 314.3 863.5 318.4 C864.0 322.5 864.1 324.3 865.1 325.5 C866.1 326.7 867.9 326.1 869.4 325.5 C870.9 324.9 872.6 323.7 874.4 322.2 C876.2 320.7 879.1 317.4 880.0 316.4" stroke="#000000" stroke-width="1.05"/></g><path d="M136.4 97.7V405" stroke="#ff1818" stroke-width="1.5"/><path d="M135.7 98.1H144.3" stroke="#ff1818" stroke-width="1.5"/><path d="M135.7 190.9H144.3" stroke="#ff1818" stroke-width="1.5"/><path d="M135.7 258.3H144.3" stroke="#ff1818" stroke-width="1.5"/><path d="M135.7 312.0H144.3" stroke="#ff1818" stroke-width="1.5"/><path d="M135.7 350.9H144.3" stroke="#ff1818" stroke-width="1.5"/><path d="M135.7 404.4H144.3" stroke="#ff1818" stroke-width="1.5"/><path d="M893.5 97.7V405.1" stroke="#800090" stroke-width="1.3"/><path d="M881.7 98.3H894.1" stroke="#800090" stroke-width="1.3"/><path d="M881.7 174.6H894.1" stroke="#800090" stroke-width="1.3"/><path d="M881.7 251.2H894.1" stroke="#800090" stroke-width="1.3"/><path d="M881.7 327.8H894.1" stroke="#800090" stroke-width="1.3"/><path d="M881.7 404.5H894.1" stroke="#800090" stroke-width="1.3"/><path d="M146 418.5H879" stroke="#0000ff" stroke-width="1.3"/><path d="M146.5 413V428.4" stroke="#101090" stroke-width="1.9"/><path d="M183.1 413V428.4" stroke="#101090" stroke-width="1.2"/><path d="M220.1 413V428.4" stroke="#101090" stroke-width="1.2"/><path d="M257.2 413V428.4" stroke="#101090" stroke-width="1.2"/><path d="M294.2 413V428.4" stroke="#101090" stroke-width="1.2"/><path d="M331.2 413V428.4" stroke="#101090" stroke-width="1.2"/><path d="M368.2 413V428.4" stroke="#101090" stroke-width="1.2"/><path d="M405.2 413V428.4" stroke="#101090" stroke-width="1.2"/><path d="M442.3 413V428.4" stroke="#101090" stroke-width="1.2"/><path d="M479.3 413V428.4" stroke="#101090" stroke-width="1.2"/><path d="M516.3 413V428.4" stroke="#101090" stroke-width="1.2"/><path d="M553.3 413V428.4" stroke="#101090" stroke-width="1.2"/><path d="M590.3 413V428.4" stroke="#101090" stroke-width="1.2"/><path d="M627.4 413V428.4" stroke="#101090" stroke-width="1.2"/><path d="M664.4 413V428.4" stroke="#101090" stroke-width="1.2"/><path d="M701.4 413V428.4" stroke="#101090" stroke-width="1.2"/><path d="M738.4 413V428.4" stroke="#101090" stroke-width="1.2"/><path d="M775.4 413V428.4" stroke="#101090" stroke-width="1.2"/><path d="M812.5 413V428.4" stroke="#101090" stroke-width="1.2"/><path d="M849.5 413V428.4" stroke="#101090" stroke-width="1.2"/></svg>
<div class="sk" style="left:396.1px;top:103.4px;width:240.4px;height:57.9px;background:#85857a"></div><div class="sk" style="left:397.6px;top:104.9px;width:238.9px;height:56.4px;background:#fdfdf2"></div><div class="sk" style="left:397.6px;top:104.9px;width:236.7px;height:54.2px;background:#ffff00"></div>
<div class="sk" style="left:457.1px;top:168.2px;width:117.4px;height:55px;background:#85857a"></div><div class="sk" style="left:458.6px;top:169.7px;width:115.9px;height:53.5px;background:#fdfdf2"></div><div class="sk" style="left:458.6px;top:169.7px;width:113.7px;height:51.3px;background:#ffff00"></div>
<span class="t" style="left:21.9px;top:3.0px;font-size:15px;color:#000;transform:scaleX(0.968);">miniVNA by IW3HEV &amp; IW3IJZ - 2 Port - RS232/USB - V 2.3.3 - Updated 06/2008 by G3RXQ &amp; IK3ZGB</span>
<span class="t" style="left:2.5px;top:31.7px;font-size:15px;color:#000;transform:scaleX(0.948);">File</span>
<span class="t" style="left:41.6px;top:31.7px;font-size:15px;color:#000;transform:scaleX(0.996);">Calibrate</span>
<span class="t" style="left:118.0px;top:31.7px;font-size:15px;color:#000;transform:scaleX(1.021);">Configure</span>
<span class="t" style="left:201.6px;top:31.7px;font-size:15px;color:#000;transform:scaleX(1.005);">Help</span>
<span class="t" style="left:11.6px;top:77.8px;font-size:15px;color:#400000;transform:scaleX(0.935);">RUN</span>
<span class="t" style="left:6.6px;top:123.8px;font-size:15px;color:#000;transform:scaleX(0.885);">Single</span>
<span class="t" style="left:3.9px;top:140.2px;font-size:15px;color:#000;transform:scaleX(0.935);">Sweep</span>
<span class="t" style="left:63.3px;top:60.3px;font-size:15px;color:#2222ff;transform:scaleX(0.937);">R.L.</span>
<span class="t" style="left:106.1px;top:60.3px;font-size:15px;color:#ff2020;transform:scaleX(0.952);">SWR</span>
<span class="t" style="left:67.5px;top:88.3px;font-size:15px;color:#0000c8;transform:scaleX(0.863);">0dB</span>
<span class="t" style="left:67.5px;top:116.1px;font-size:15px;color:#0000c8;transform:scaleX(0.863);">3dB</span>
<span class="t" style="left:67.5px;top:145.3px;font-size:15px;color:#0000c8;transform:scaleX(0.863);">6dB</span>
<span class="t" style="left:60.2px;top:186.3px;font-size:15px;color:#0000c8;transform:scaleX(0.866);">10dB</span>
<span class="t" style="left:59.1px;top:289.9px;font-size:15px;color:#0000c8;transform:scaleX(0.896);">20dB</span>
<span class="t" style="left:59.1px;top:390.9px;font-size:15px;color:#0000c8;transform:scaleX(0.896);">30dB</span>
<span class="t" style="left:115.4px;top:87.3px;font-size:15px;color:#ff1010;transform:scaleX(0.994);">10</span>
<span class="t" style="left:123.5px;top:179.3px;font-size:15px;color:#ff1010;transform:scaleX(1.024);">5</span>
<span class="t" style="left:122.9px;top:246.9px;font-size:15px;color:#ff1010;transform:scaleX(1.039);">3</span>
<span class="t" style="left:122.6px;top:302.2px;font-size:15px;color:#ff1010;transform:scaleX(1.085);">2</span>
<span class="t" style="left:111.6px;top:339.7px;font-size:15px;color:#ff1010;transform:scaleX(0.960);">1.5</span>
<span class="t" style="left:124.1px;top:392.5px;font-size:15px;color:#ff1010;transform:scaleX(0.657);">1</span>
<span class="t" style="left:103.1px;top:422.6px;font-size:15px;color:#2222ff;transform:scaleX(0.923);">MHz</span>
<span class="t" style="left:13.8px;top:202.3px;font-size:15px;color:#000;transform:scaleX(0.887);">LOSS</span>
<span class="t" style="left:30.2px;top:225.6px;font-size:15px;color:#000;transform:scaleX(1.009);">0</span>
<span class="t" style="left:16.6px;top:253.7px;font-size:15px;color:#0000c8;transform:scaleX(0.909);">Offset</span>
<span class="t" style="left:217.6px;top:65.1px;font-size:15px;color:#000;transform:scaleX(1.008);">Antenna</span>
<span class="t" style="left:323.7px;top:64.0px;font-size:15px;color:#000;transform:scaleX(0.939);">Cable Loss</span>
<span class="t" style="left:427.6px;top:64.0px;font-size:15px;color:#000;transform:scaleX(0.983);">Cable Length</span>
<span class="t" style="left:550.4px;top:64.0px;font-size:15px;color:#000;transform:scaleX(0.971);">Transmission</span>
<span class="t" style="left:692.5px;top:64.0px;font-size:15px;color:#000;transform:scaleX(0.975);">Generator</span>
<span class="t" style="left:882.5px;top:60.8px;font-size:15px;color:#c8501e;transform:scaleX(0.887);">PHASE</span>
<span class="t" style="left:937.6px;top:60.8px;font-size:15px;color:#a020a0;transform:scaleX(0.937);">X-R-Z</span>
<span class="t" style="left:894.1px;top:88.3px;font-size:15px;color:#000;transform:scaleX(0.917);">180°</span>
<span class="t" style="left:893.8px;top:164.6px;font-size:15px;color:#000;transform:scaleX(0.900);">135°</span>
<span class="t" style="left:902.1px;top:241.0px;font-size:15px;color:#000;transform:scaleX(0.867);">90°</span>
<span class="t" style="left:902.1px;top:318.7px;font-size:15px;color:#000;transform:scaleX(0.867);">45°</span>
<span class="t" style="left:915.5px;top:394.7px;font-size:15px;color:#000;transform:scaleX(0.893);">0°</span>
<span class="t" style="left:926.7px;top:88.3px;font-size:15px;color:#800090;transform:scaleX(0.881);">500 Ohm</span>
<span class="t" style="left:926.7px;top:164.6px;font-size:15px;color:#800090;transform:scaleX(0.881);">375 Ohm</span>
<span class="t" style="left:926.7px;top:241.0px;font-size:15px;color:#800090;transform:scaleX(0.881);">250 Ohm</span>
<span class="t" style="left:926.7px;top:318.7px;font-size:15px;color:#800090;transform:scaleX(0.881);">125 Ohm</span>
<span class="t" style="left:941.6px;top:394.7px;font-size:15px;color:#800090;transform:scaleX(0.877);">0 Ohm</span>
<span class="t" style="left:933.8px;top:363.7px;font-size:15px;color:#000;transform:scaleX(0.886);">50 Ohm</span>
<span class="t" style="left:892.4px;top:422.8px;font-size:15px;color:#2222ff;transform:scaleX(0.913);">MHz</span>
<span class="t" style="left:18.9px;top:449.9px;font-size:15px;color:#000;transform:scaleX(0.899);">MARKERS</span>
<span class="t" style="left:45.2px;top:494.8px;font-size:15px;color:#000;transform:scaleX(0.875);">Marker 1</span>
<span class="t" style="left:45.2px;top:522.0px;font-size:15px;color:#000;transform:scaleX(0.892);">Marker 2</span>
<span class="t" style="left:138.8px;top:494.8px;font-size:15px;color:#000;transform:scaleX(1.009);">L</span>
<span class="t" style="left:137.5px;top:522.0px;font-size:15px;color:#000;transform:scaleX(1.009);">L</span>
<span class="t" style="left:200.6px;top:449.9px;font-size:15px;color:#000;transform:scaleX(0.922);">VALUES</span>
<span class="t" style="left:242.9px;top:467.3px;font-size:15px;color:#000;transform:scaleX(0.879);">FREQ.</span>
<span class="t" style="left:222.0px;top:491.5px;font-size:15.5px;color:#000;transform:scaleX(1.042);font-weight:bold;">144 480 000</span>
<span class="t" style="left:222.0px;top:521.5px;font-size:15.5px;color:#000;transform:scaleX(1.042);font-weight:bold;">145 680 000</span>
<span class="t" style="left:356.3px;top:467.3px;font-size:15px;color:#ff1010;transform:scaleX(0.940);">SWR</span>
<span class="t" style="left:437.1px;top:467.3px;font-size:15px;color:#900090;transform:scaleX(1.470);">|Z|</span>
<span class="t" style="left:508.5px;top:467.3px;font-size:15px;color:#2222ff;transform:scaleX(0.937);">R.L.</span>
<span class="t" style="left:575.1px;top:467.3px;font-size:15px;color:#000;transform:scaleX(0.879);">PHASE</span>
<span class="t" style="left:664.5px;top:467.3px;font-size:15px;color:#ff8000;transform:scaleX(1.022);">Rs</span>
<span class="t" style="left:726.5px;top:467.3px;font-size:15px;color:#ff1010;transform:scaleX(1.039);">|Xs| +j</span>
<span class="t" style="left:797.5px;top:467.3px;font-size:15px;color:#ff1010;transform:scaleX(0.923);">Xl to uH</span>
<span class="t" style="left:356.9px;top:492.5px;font-size:15px;color:#000;transform:scaleX(1.080);font-weight:bold;">1.77</span>
<span class="t" style="left:428.0px;top:492.5px;font-size:15px;color:#000;transform:scaleX(1.099);font-weight:bold;">37.19</span>
<span class="t" style="left:502.8px;top:492.5px;font-size:15px;color:#000;transform:scaleX(1.123);font-weight:bold;">11.07</span>
<span class="t" style="left:573.2px;top:492.5px;font-size:15px;color:#000;transform:scaleX(1.091);font-weight:bold;">123.76</span>
<span class="t" style="left:656.8px;top:492.5px;font-size:15px;color:#000;transform:scaleX(1.109);font-weight:bold;">33.2</span>
<span class="t" style="left:727.7px;top:492.5px;font-size:15px;color:#000;transform:scaleX(1.111);font-weight:bold;">16.76</span>
<span class="t" style="left:806.2px;top:492.5px;font-size:15px;color:#000;transform:scaleX(1.139);font-weight:bold;">0.02</span>
<span class="t" style="left:356.9px;top:522.5px;font-size:15px;color:#000;transform:scaleX(1.080);font-weight:bold;">1.75</span>
<span class="t" style="left:428.0px;top:522.5px;font-size:15px;color:#000;transform:scaleX(1.099);font-weight:bold;">38.69</span>
<span class="t" style="left:506.5px;top:522.5px;font-size:15px;color:#000;transform:scaleX(1.144);font-weight:bold;">11.3</span>
<span class="t" style="left:573.2px;top:522.5px;font-size:15px;color:#000;transform:scaleX(1.112);font-weight:bold;">119.72</span>
<span class="t" style="left:652.9px;top:522.5px;font-size:15px;color:#000;transform:scaleX(1.099);font-weight:bold;">34.45</span>
<span class="t" style="left:727.7px;top:522.5px;font-size:15px;color:#000;transform:scaleX(1.111);font-weight:bold;">17.62</span>
<span class="t" style="left:806.2px;top:522.5px;font-size:15px;color:#000;transform:scaleX(1.139);font-weight:bold;">0.02</span>
<span class="t" style="left:891.0px;top:449.9px;font-size:15px;color:#000;transform:scaleX(0.921);">DISPLAY</span>
<span class="t" style="left:913.7px;top:467.2px;font-size:15px;color:#000;transform:scaleX(0.900);">Loss x2</span>
<span class="t" style="left:913.7px;top:488.2px;font-size:15px;color:#000;transform:scaleX(0.890);">Full</span>
<span class="t" style="left:913.6px;top:509.2px;font-size:15px;color:#000;transform:scaleX(1.008);">Xc / Xl</span>
<span class="t" style="left:913.7px;top:530.2px;font-size:15px;color:#000;transform:scaleX(0.910);">50 ohm</span>
<span class="t" style="left:891.0px;top:554.9px;font-size:15px;color:#000;transform:scaleX(0.918);">BW and Q</span>
<span class="t" style="left:913.7px;top:574.6px;font-size:15px;color:#000;transform:scaleX(0.899);">Enable</span>
<span class="t" style="left:17.3px;top:609.9px;font-size:15px;color:#000;transform:scaleX(0.897);">FREQUENCY SWEEP LIMITS</span>
<span class="t" style="left:23.7px;top:630.2px;font-size:15px;color:#000;transform:scaleX(0.913);">Start</span>
<span class="t" style="left:23.7px;top:655.6px;font-size:15px;color:#000;transform:scaleX(0.939);">Stop</span>
<span class="t" style="left:93.9px;top:631.9px;font-size:16px;color:#000;transform:scaleX(1.049);font-weight:bold;">130</span>
<span class="t" style="left:93.9px;top:657.3px;font-size:16px;color:#000;transform:scaleX(1.049);font-weight:bold;">150</span>
<span class="t" style="left:162.5px;top:631.3px;font-size:15px;color:#000;transform:scaleX(0.934);">MHz</span>
<span class="t" style="left:162.5px;top:658.2px;font-size:15px;color:#000;transform:scaleX(0.934);">MHz</span>
<span class="t" style="left:63.7px;top:685.9px;font-size:15px;color:#000;transform:scaleX(0.907);">Full</span>
<span class="t" style="left:123.7px;top:685.9px;font-size:15px;color:#000;transform:scaleX(0.963);">Save</span>
<span class="t" style="left:55.3px;top:710.9px;font-size:15px;color:#000;transform:scaleX(0.944);">Zoom</span>
<span class="t" style="left:121.9px;top:710.9px;font-size:15px;color:#a0a0a0;transform:scaleX(0.923);text-shadow:1px 1px 0 #fff;">Recall</span>
<span class="t" style="left:228.7px;top:609.9px;font-size:15px;color:#000;transform:scaleX(0.904);">BANDS</span>
<span class="t" style="left:250.2px;top:630.7px;font-size:15px;color:#000;transform:scaleX(0.874);">HF</span>
<span class="t" style="left:250.2px;top:656.8px;font-size:15px;color:#000;transform:scaleX(0.908);">VHF</span>
<span class="t" style="left:333.8px;top:653.5px;font-size:15px;color:#000;transform:scaleX(0.960);">500</span>
<span class="t" style="left:325.1px;top:676.3px;font-size:15px;color:#000;transform:scaleX(0.916);">Steps</span>
<span class="t" style="left:394.8px;top:641.3px;font-size:15px;color:#000;transform:scaleX(0.918);">BANDWIDTH and Q</span>
<span class="t" style="left:429.1px;top:684.5px;font-size:15px;color:#000;transform:scaleX(1.096);font-weight:bold;">1 200 000</span>
<span class="t" style="left:593.7px;top:684.5px;font-size:15px;color:#000;transform:scaleX(1.020);font-weight:bold;">121</span>
<span class="t" style="left:434.3px;top:706.0px;font-size:15px;color:#000;transform:scaleX(0.905);">Bandwidth</span>
<span class="t" style="left:602.5px;top:706.0px;font-size:15px;color:#000;transform:scaleX(0.972);">Q</span>
<span class="t" style="left:709.6px;top:609.9px;font-size:15px;color:#000;transform:scaleX(0.889);">TRACE ENABLE AND COLOURS</span>
<span class="t" style="left:737.2px;top:633.0px;font-size:15px;color:#ff1010;transform:scaleX(0.952);">SWR</span>
<span class="t" style="left:709.5px;top:659.2px;font-size:15px;color:#800090;transform:scaleX(1.059);">|Z| / ohm</span>
<span class="t" style="left:712.6px;top:685.7px;font-size:15px;color:#0000ff;transform:scaleX(0.925);">Loss / dB</span>
<span class="t" style="left:838.7px;top:633.0px;font-size:15px;color:#000;transform:scaleX(0.939);">PHASE /°</span>
<span class="t" style="left:844.1px;top:659.2px;font-size:15px;color:#ff8000;transform:scaleX(0.928);">Rs / ohm</span>
<span class="t" style="left:832.5px;top:685.7px;font-size:15px;color:#008000;transform:scaleX(1.005);">|Xs| / ohm</span>
<span class="t" style="left:789.3px;top:713.1px;font-size:15px;color:#000;transform:scaleX(0.955);">All</span>
<span class="t" style="left:910.3px;top:713.1px;font-size:15px;color:#000;transform:scaleX(0.928);">None</span>
<span class="t" style="left:146.2px;top:425.4px;font-size:15px;color:#1010e8;transform:scaleX(0.874);">130</span>
<span class="t" style="left:180.2px;top:425.4px;font-size:15px;color:#1010e8;transform:scaleX(0.882);">131</span>
<span class="t" style="left:217.2px;top:425.4px;font-size:15px;color:#1010e8;transform:scaleX(0.882);">132</span>
<span class="t" style="left:254.2px;top:425.4px;font-size:15px;color:#1010e8;transform:scaleX(0.882);">133</span>
<span class="t" style="left:291.2px;top:425.4px;font-size:15px;color:#1010e8;transform:scaleX(0.882);">134</span>
<span class="t" style="left:328.2px;top:425.4px;font-size:15px;color:#1010e8;transform:scaleX(0.882);">135</span>
<span class="t" style="left:365.3px;top:425.4px;font-size:15px;color:#1010e8;transform:scaleX(0.882);">136</span>
<span class="t" style="left:402.3px;top:425.4px;font-size:15px;color:#1010e8;transform:scaleX(0.882);">137</span>
<span class="t" style="left:439.3px;top:425.4px;font-size:15px;color:#1010e8;transform:scaleX(0.882);">138</span>
<span class="t" style="left:476.3px;top:425.4px;font-size:15px;color:#1010e8;transform:scaleX(0.882);">139</span>
<span class="t" style="left:513.3px;top:425.4px;font-size:15px;color:#1010e8;transform:scaleX(0.882);">140</span>
<span class="t" style="left:550.4px;top:425.4px;font-size:15px;color:#1010e8;transform:scaleX(0.882);">141</span>
<span class="t" style="left:587.4px;top:425.4px;font-size:15px;color:#1010e8;transform:scaleX(0.882);">142</span>
<span class="t" style="left:624.4px;top:425.4px;font-size:15px;color:#1010e8;transform:scaleX(0.882);">143</span>
<span class="t" style="left:661.4px;top:425.4px;font-size:15px;color:#1010e8;transform:scaleX(0.882);">144</span>
<span class="t" style="left:698.4px;top:425.4px;font-size:15px;color:#1010e8;transform:scaleX(0.882);">145</span>
<span class="t" style="left:735.5px;top:425.4px;font-size:15px;color:#1010e8;transform:scaleX(0.882);">146</span>
<span class="t" style="left:772.5px;top:425.4px;font-size:15px;color:#1010e8;transform:scaleX(0.882);">147</span>
<span class="t" style="left:809.5px;top:425.4px;font-size:15px;color:#1010e8;transform:scaleX(0.882);">148</span>
<span class="t" style="left:846.5px;top:425.4px;font-size:15px;color:#1010e8;transform:scaleX(0.882);">149</span>
<span class="t" style="left:658.2px;top:386.4px;font-size:13px;color:#ff0000;transform:scaleX(0.988);">M1</span>
<span class="t" style="left:701.8px;top:386.4px;font-size:13px;color:#0000ff;transform:scaleX(1.085);">M2</span>
<span class="t" style="left:404.5px;top:118.0px;font-size:40px;color:#000;transform:scaleX(1.000);">149 280 000</span>
<span class="t" style="left:477.6px;top:183.5px;font-size:40px;color:#000;transform:scaleX(0.999);">1.05</span>
</div></body></html>
